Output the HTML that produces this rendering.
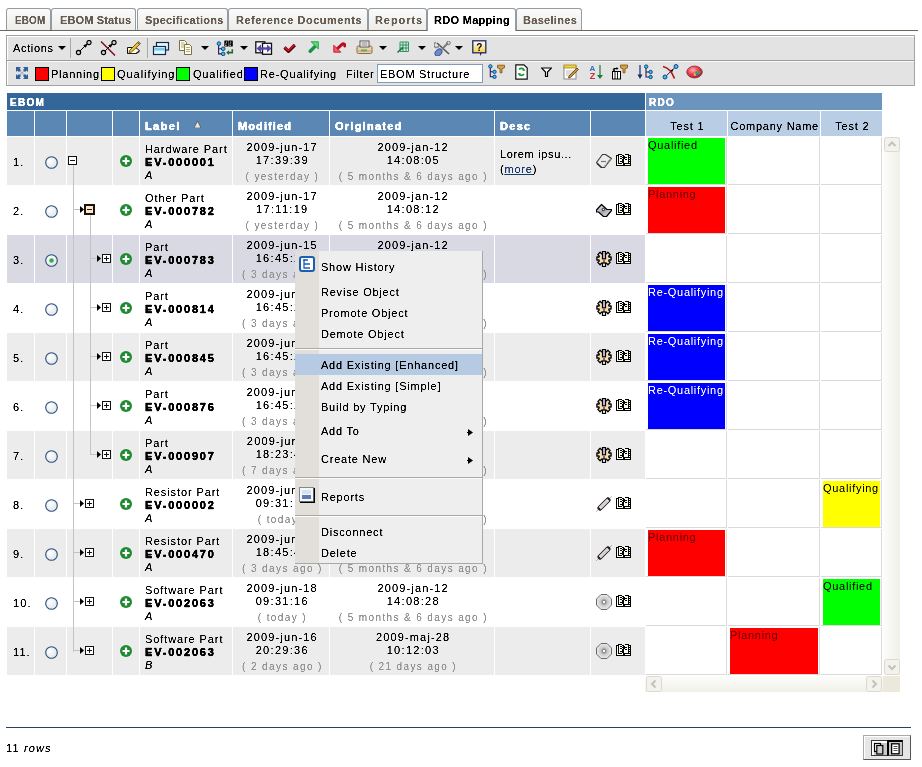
<!DOCTYPE html><html><head><meta charset="utf-8"><style>
html,body{margin:0;padding:0;}
body{will-change:transform;width:922px;height:767px;position:relative;overflow:hidden;background:#fff;font-family:'Liberation Sans', sans-serif;}
.r{position:absolute;box-sizing:border-box;}
.t{position:absolute;white-space:pre;line-height:13px;font-family:'Liberation Sans', sans-serif;filter:url(#crisp);}
</style></head><body>
<svg width="0" height="0" style="position:absolute"><filter id="crisp"><feComponentTransfer><feFuncA type="linear" slope="2" intercept="-0.3"/></feComponentTransfer></filter><filter id="crisp3"><feComponentTransfer><feFuncA type="linear" slope="1.3" intercept="-0.12"/></feComponentTransfer></filter></svg>
<div class="r" style="left:0px;top:30px;width:918px;height:1px;background:#6e655c;"></div>
<div class="r" style="left:6px;top:8px;width:45px;height:22px;background:linear-gradient(#fbfbfb,#ececea);border:1px solid #949ca3;border-bottom:none;border-radius:3px 3px 0 0;"></div>
<div class="t" style="left:15px;top:14px;font-size:11px;letter-spacing:0.2px;color:#675d52;font-weight:bold;-webkit-text-stroke:0.3px #675d52;-webkit-text-stroke:0;transform:scaleX(0.9);transform-origin:0 0;">EBOM</div>
<div class="r" style="left:51px;top:8px;width:85px;height:22px;background:linear-gradient(#fbfbfb,#ececea);border:1px solid #949ca3;border-bottom:none;border-radius:3px 3px 0 0;"></div>
<div class="t" style="left:60px;top:14px;font-size:11px;letter-spacing:0.15px;color:#675d52;font-weight:bold;-webkit-text-stroke:0.3px #675d52;-webkit-text-stroke:0;">EBOM Status</div>
<div class="r" style="left:137px;top:8px;width:91px;height:22px;background:linear-gradient(#fbfbfb,#ececea);border:1px solid #949ca3;border-bottom:none;border-radius:3px 3px 0 0;"></div>
<div class="t" style="left:145px;top:14px;font-size:11px;letter-spacing:0.3px;color:#675d52;font-weight:bold;-webkit-text-stroke:0.3px #675d52;-webkit-text-stroke:0;">Specifications</div>
<div class="r" style="left:228px;top:8px;width:140px;height:22px;background:linear-gradient(#fbfbfb,#ececea);border:1px solid #949ca3;border-bottom:none;border-radius:3px 3px 0 0;"></div>
<div class="t" style="left:236px;top:14px;font-size:11px;letter-spacing:0.52px;color:#675d52;font-weight:bold;-webkit-text-stroke:0.3px #675d52;-webkit-text-stroke:0;">Reference Documents</div>
<div class="r" style="left:368px;top:8px;width:59px;height:22px;background:linear-gradient(#fbfbfb,#ececea);border:1px solid #949ca3;border-bottom:none;border-radius:3px 3px 0 0;"></div>
<div class="t" style="left:375px;top:14px;font-size:11px;letter-spacing:0.93px;color:#675d52;font-weight:bold;-webkit-text-stroke:0.3px #675d52;-webkit-text-stroke:0;">Reports</div>
<div class="r" style="left:427px;top:8px;width:89px;height:23px;background:#ffffff;border:1px solid #949ca3;border-bottom:none;border-radius:3px 3px 0 0;"></div>
<div class="t" style="left:434px;top:14px;font-size:11px;letter-spacing:0.3px;color:#000;font-weight:bold;-webkit-text-stroke:0.3px #000;-webkit-text-stroke:0;">RDO Mapping</div>
<div class="r" style="left:516px;top:8px;width:66px;height:22px;background:linear-gradient(#fbfbfb,#ececea);border:1px solid #949ca3;border-bottom:none;border-radius:3px 3px 0 0;"></div>
<div class="t" style="left:523px;top:14px;font-size:11px;letter-spacing:0.3px;color:#675d52;font-weight:bold;-webkit-text-stroke:0.3px #675d52;-webkit-text-stroke:0;">Baselines</div>
<div class="r" style="left:6px;top:35px;width:909px;height:51px;background:#e3e3e3;border:1px solid #a3a3a3;box-shadow:inset 1px 1px 0 #fff;"></div>
<div class="r" style="left:7px;top:60px;width:907px;height:1px;background:#9c9c9c;"></div>
<div class="r" style="left:7px;top:61px;width:907px;height:1px;background:#fafafa;"></div>
<div class="t" style="left:13px;top:42px;font-size:11px;letter-spacing:0.65px;color:#000;">Actions</div>
<svg class="r" style="left:58px;top:46px;" width="8" height="4" viewBox="0 0 8 4"><path d="M0 0H8L4 4Z" fill="#000"/></svg>
<div class="r" style="left:70px;top:38px;width:1px;height:20px;background:#a8a8a8;"></div>
<div class="r" style="left:147px;top:38px;width:1px;height:20px;background:#a8a8a8;"></div>
<svg class="r" style="left:15px;top:66px;" width="14" height="14" viewBox="0 0 14 14"><g stroke="#a8bccf" stroke-width="1.3" fill="none"><path d="M3 3L11 11M11 3L3 11"/></g><g fill="#2f5e98"><path d="M1 1h5l-1.5 1.5 1.5 1.5-2 2-1.5-1.5L1 6z M13 1h-5l1.5 1.5-1.5 1.5 2 2 1.5-1.5L13 6z M1 13h5l-1.5-1.5 1.5-1.5-2-2-1.5 1.5L1 8z M13 13h-5l1.5-1.5-1.5-1.5 2-2 1.5 1.5L13 8z"/></g></svg>
<div class="r" style="left:35px;top:67px;width:14px;height:14px;background:#ff0000;border:1px solid #000;"></div>
<div class="t" style="left:51px;top:68px;font-size:11px;letter-spacing:0.75px;color:#000;">Planning</div>
<div class="r" style="left:101px;top:67px;width:14px;height:14px;background:#ffff00;border:1px solid #000;"></div>
<div class="t" style="left:117px;top:68px;font-size:11px;letter-spacing:0.95px;color:#000;">Qualifying</div>
<div class="r" style="left:176px;top:67px;width:14px;height:14px;background:#00ff00;border:1px solid #000;"></div>
<div class="t" style="left:193px;top:68px;font-size:11px;letter-spacing:0.8px;color:#000;">Qualified</div>
<div class="r" style="left:244px;top:67px;width:14px;height:14px;background:#0000ff;border:1px solid #000;"></div>
<div class="t" style="left:260px;top:68px;font-size:11px;letter-spacing:0.8px;color:#000;">Re-Qualifying</div>
<div class="t" style="left:346px;top:68px;font-size:11px;letter-spacing:0.65px;color:#000;">Filter</div>
<div class="r" style="left:377px;top:64px;width:106px;height:19px;background:#fff;border:1px solid #7f9db9;"></div>
<div class="t" style="left:380px;top:68px;font-size:11px;letter-spacing:0.72px;color:#000;">EBOM Structure</div>
<div class="r" style="left:7px;top:93px;width:638px;height:17px;background:#336699;"></div>
<div class="t" style="left:10px;top:96px;font-size:10px;letter-spacing:1.3px;color:#fff;font-weight:bold;-webkit-text-stroke:0.3px #fff;-webkit-text-stroke:0.2px #fff;">EBOM</div>
<div class="r" style="left:646px;top:93px;width:236px;height:17px;background:#6b94bf;"></div>
<div class="t" style="left:649px;top:96px;font-size:10px;letter-spacing:1.3px;color:#fff;font-weight:bold;-webkit-text-stroke:0.3px #fff;-webkit-text-stroke:0.2px #fff;">RDO</div>
<div class="r" style="left:7px;top:111px;width:27px;height:25px;background:#5b87b4;"></div>
<div class="r" style="left:35px;top:111px;width:31px;height:25px;background:#5b87b4;"></div>
<div class="r" style="left:67px;top:111px;width:45px;height:25px;background:#5b87b4;"></div>
<div class="r" style="left:113px;top:111px;width:26px;height:25px;background:#5b87b4;"></div>
<div class="r" style="left:140px;top:111px;width:92px;height:25px;background:#5b87b4;"></div>
<div class="r" style="left:233px;top:111px;width:96px;height:25px;background:#5b87b4;"></div>
<div class="r" style="left:330px;top:111px;width:164px;height:25px;background:#5b87b4;"></div>
<div class="r" style="left:495px;top:111px;width:95px;height:25px;background:#5b87b4;"></div>
<div class="r" style="left:591px;top:111px;width:54px;height:25px;background:#5b87b4;"></div>
<div class="t" style="left:145px;top:120px;font-size:11px;letter-spacing:1.4px;color:#fff;font-weight:bold;-webkit-text-stroke:0.3px #fff;">Label</div>
<svg class="r" style="left:194px;top:121px;" width="7" height="7" viewBox="0 0 7 7"><path d="M3.5 0L7 7H0Z" fill="#e8e8e0" stroke="#334" stroke-width="0.6"/></svg>
<div class="t" style="left:238px;top:120px;font-size:11px;letter-spacing:1.1px;color:#fff;font-weight:bold;-webkit-text-stroke:0.3px #fff;">Modified</div>
<div class="t" style="left:335px;top:120px;font-size:11px;letter-spacing:1.25px;color:#fff;font-weight:bold;-webkit-text-stroke:0.3px #fff;">Originated</div>
<div class="t" style="left:500px;top:120px;font-size:11px;letter-spacing:1.3px;color:#fff;font-weight:bold;-webkit-text-stroke:0.3px #fff;">Desc</div>
<div class="r" style="left:646px;top:111px;width:81px;height:25px;background:#b9cde5;"></div>
<div class="t" style="left:646px;top:120px;font-size:11px;letter-spacing:0.8px;color:#000;width:81px;text-align:center;padding-left:0.8px;">Test 1</div>
<div class="r" style="left:728px;top:111px;width:92px;height:25px;background:#b9cde5;"></div>
<div class="t" style="left:728px;top:120px;font-size:11px;letter-spacing:0.75px;color:#000;width:92px;text-align:center;padding-left:0.75px;">Company Name</div>
<div class="r" style="left:821px;top:111px;width:61px;height:25px;background:#b9cde5;"></div>
<div class="t" style="left:821px;top:120px;font-size:11px;letter-spacing:0.8px;color:#000;width:61px;text-align:center;padding-left:0.8px;">Test 2</div>
<div class="r" style="left:7px;top:137px;width:27px;height:48px;background:#ececec;"></div>
<div class="r" style="left:35px;top:137px;width:31px;height:48px;background:#ececec;"></div>
<div class="r" style="left:67px;top:137px;width:45px;height:48px;background:#ececec;"></div>
<div class="r" style="left:113px;top:137px;width:26px;height:48px;background:#ececec;"></div>
<div class="r" style="left:140px;top:137px;width:92px;height:48px;background:#ececec;"></div>
<div class="r" style="left:233px;top:137px;width:96px;height:48px;background:#ececec;"></div>
<div class="r" style="left:330px;top:137px;width:164px;height:48px;background:#ececec;"></div>
<div class="r" style="left:495px;top:137px;width:95px;height:48px;background:#ececec;"></div>
<div class="r" style="left:591px;top:137px;width:54px;height:48px;background:#ececec;"></div>
<div class="t" style="left:13px;top:156px;font-size:11px;letter-spacing:1.1px;color:#000;">1.</div>
<svg class="r" style="left:45px;top:156px;" width="13" height="13" viewBox="0 0 13 13"><defs><radialGradient id="rg0" cx="35%" cy="35%" r="70%"><stop offset="0" stop-color="#fff"/><stop offset="1" stop-color="#dfe6ee"/></radialGradient></defs><circle cx="6.5" cy="6.5" r="5.8" fill="url(#rg0)" stroke="#2c4c74" stroke-width="1.1"/></svg>
<svg class="r" style="left:120px;top:155px;" width="12" height="12" viewBox="0 0 12 12"><circle cx="6" cy="6" r="6" fill="#1f8b30"/><path d="M6 2.5V9.5M2.5 6H9.5" stroke="#fff" stroke-width="2.2"/></svg>
<div class="t" style="left:145px;top:143px;font-size:11px;letter-spacing:0.9px;color:#000;">Hardware Part</div>
<div class="t" style="left:145px;top:156px;font-size:11px;letter-spacing:1.8px;color:#000;font-weight:bold;-webkit-text-stroke:0.3px #000;">EV-000001</div>
<div class="t" style="left:145px;top:169px;font-size:11px;letter-spacing:0px;color:#000;font-style:italic;">A</div>
<div class="t" style="left:233px;top:141px;font-size:11px;letter-spacing:1.15px;color:#000;width:96px;text-align:center;padding-left:1.15px;">2009-jun-17</div>
<div class="t" style="left:233px;top:154px;font-size:11px;letter-spacing:1.3px;color:#000;width:96px;text-align:center;padding-left:1.3px;">17:39:39</div>
<div class="t" style="left:233px;top:170px;font-size:10px;letter-spacing:1.4px;color:#939393;width:96px;text-align:center;padding-left:1.4px;">( yesterday )</div>
<div class="t" style="left:330px;top:141px;font-size:11px;letter-spacing:1.15px;color:#000;width:164px;text-align:center;padding-left:1.15px;">2009-jan-12</div>
<div class="t" style="left:330px;top:154px;font-size:11px;letter-spacing:1.3px;color:#000;width:164px;text-align:center;padding-left:1.3px;">14:08:05</div>
<div class="t" style="left:330px;top:170px;font-size:10px;letter-spacing:1.38px;color:#939393;width:164px;text-align:center;padding-left:1.38px;">( 5 months &amp; 6 days ago )</div>
<div class="r" style="left:646px;top:137px;width:81px;height:48px;background:#fff;border-right:1px solid #dadada;border-bottom:1px solid #dadada;"></div>
<div class="r" style="left:728px;top:137px;width:92px;height:48px;background:#fff;border-right:1px solid #dadada;border-bottom:1px solid #dadada;"></div>
<div class="r" style="left:821px;top:137px;width:61px;height:48px;background:#fff;border-right:1px solid #dadada;border-bottom:1px solid #dadada;"></div>
<div class="r" style="left:648px;top:138px;width:77px;height:46px;background:#00ff00;"></div>
<div class="t" style="left:648px;top:139px;font-size:11px;letter-spacing:0.7px;color:#000;overflow:hidden;width:77px;filter:url(#crisp3);">Qualified</div>
<div class="r" style="left:7px;top:186px;width:27px;height:48px;background:#ffffff;"></div>
<div class="r" style="left:35px;top:186px;width:31px;height:48px;background:#ffffff;"></div>
<div class="r" style="left:67px;top:186px;width:45px;height:48px;background:#ffffff;"></div>
<div class="r" style="left:113px;top:186px;width:26px;height:48px;background:#ffffff;"></div>
<div class="r" style="left:140px;top:186px;width:92px;height:48px;background:#ffffff;"></div>
<div class="r" style="left:233px;top:186px;width:96px;height:48px;background:#ffffff;"></div>
<div class="r" style="left:330px;top:186px;width:164px;height:48px;background:#ffffff;"></div>
<div class="r" style="left:495px;top:186px;width:95px;height:48px;background:#ffffff;"></div>
<div class="r" style="left:591px;top:186px;width:54px;height:48px;background:#ffffff;"></div>
<div class="t" style="left:13px;top:205px;font-size:11px;letter-spacing:1.1px;color:#000;">2.</div>
<svg class="r" style="left:45px;top:205px;" width="13" height="13" viewBox="0 0 13 13"><defs><radialGradient id="rg1" cx="35%" cy="35%" r="70%"><stop offset="0" stop-color="#fff"/><stop offset="1" stop-color="#dfe6ee"/></radialGradient></defs><circle cx="6.5" cy="6.5" r="5.8" fill="url(#rg1)" stroke="#2c4c74" stroke-width="1.1"/></svg>
<svg class="r" style="left:120px;top:204px;" width="12" height="12" viewBox="0 0 12 12"><circle cx="6" cy="6" r="6" fill="#1f8b30"/><path d="M6 2.5V9.5M2.5 6H9.5" stroke="#fff" stroke-width="2.2"/></svg>
<div class="t" style="left:145px;top:192px;font-size:11px;letter-spacing:0.9px;color:#000;">Other Part</div>
<div class="t" style="left:145px;top:205px;font-size:11px;letter-spacing:1.8px;color:#000;font-weight:bold;-webkit-text-stroke:0.3px #000;">EV-000782</div>
<div class="t" style="left:145px;top:218px;font-size:11px;letter-spacing:0px;color:#000;font-style:italic;">A</div>
<div class="t" style="left:233px;top:190px;font-size:11px;letter-spacing:1.15px;color:#000;width:96px;text-align:center;padding-left:1.15px;">2009-jun-17</div>
<div class="t" style="left:233px;top:203px;font-size:11px;letter-spacing:1.3px;color:#000;width:96px;text-align:center;padding-left:1.3px;">17:11:19</div>
<div class="t" style="left:233px;top:219px;font-size:10px;letter-spacing:1.4px;color:#939393;width:96px;text-align:center;padding-left:1.4px;">( yesterday )</div>
<div class="t" style="left:330px;top:190px;font-size:11px;letter-spacing:1.15px;color:#000;width:164px;text-align:center;padding-left:1.15px;">2009-jan-12</div>
<div class="t" style="left:330px;top:203px;font-size:11px;letter-spacing:1.3px;color:#000;width:164px;text-align:center;padding-left:1.3px;">14:08:12</div>
<div class="t" style="left:330px;top:219px;font-size:10px;letter-spacing:1.38px;color:#939393;width:164px;text-align:center;padding-left:1.38px;">( 5 months &amp; 6 days ago )</div>
<div class="r" style="left:646px;top:186px;width:81px;height:48px;background:#fff;border-right:1px solid #dadada;border-bottom:1px solid #dadada;"></div>
<div class="r" style="left:728px;top:186px;width:92px;height:48px;background:#fff;border-right:1px solid #dadada;border-bottom:1px solid #dadada;"></div>
<div class="r" style="left:821px;top:186px;width:61px;height:48px;background:#fff;border-right:1px solid #dadada;border-bottom:1px solid #dadada;"></div>
<div class="r" style="left:648px;top:187px;width:77px;height:46px;background:#ff0000;"></div>
<div class="t" style="left:648px;top:188px;font-size:11px;letter-spacing:0.7px;color:#600;overflow:hidden;width:77px;filter:url(#crisp3);">Planning</div>
<div class="r" style="left:7px;top:235px;width:27px;height:48px;background:#d9d9e4;"></div>
<div class="r" style="left:35px;top:235px;width:31px;height:48px;background:#d9d9e4;"></div>
<div class="r" style="left:67px;top:235px;width:45px;height:48px;background:#d9d9e4;"></div>
<div class="r" style="left:113px;top:235px;width:26px;height:48px;background:#d9d9e4;"></div>
<div class="r" style="left:140px;top:235px;width:92px;height:48px;background:#d9d9e4;"></div>
<div class="r" style="left:233px;top:235px;width:96px;height:48px;background:#d9d9e4;"></div>
<div class="r" style="left:330px;top:235px;width:164px;height:48px;background:#d9d9e4;"></div>
<div class="r" style="left:495px;top:235px;width:95px;height:48px;background:#d9d9e4;"></div>
<div class="r" style="left:591px;top:235px;width:54px;height:48px;background:#d9d9e4;"></div>
<div class="t" style="left:13px;top:254px;font-size:11px;letter-spacing:1.1px;color:#000;">3.</div>
<svg class="r" style="left:45px;top:254px;" width="13" height="13" viewBox="0 0 13 13"><defs><radialGradient id="rg2" cx="35%" cy="35%" r="70%"><stop offset="0" stop-color="#fff"/><stop offset="1" stop-color="#dfe6ee"/></radialGradient></defs><circle cx="6.5" cy="6.5" r="5.8" fill="url(#rg2)" stroke="#2c4c74" stroke-width="1.1"/><circle cx="6.5" cy="6.5" r="2.3" fill="#31b04a"/></svg>
<svg class="r" style="left:120px;top:253px;" width="12" height="12" viewBox="0 0 12 12"><circle cx="6" cy="6" r="6" fill="#1f8b30"/><path d="M6 2.5V9.5M2.5 6H9.5" stroke="#fff" stroke-width="2.2"/></svg>
<div class="t" style="left:145px;top:241px;font-size:11px;letter-spacing:0.9px;color:#000;">Part</div>
<div class="t" style="left:145px;top:254px;font-size:11px;letter-spacing:1.8px;color:#000;font-weight:bold;-webkit-text-stroke:0.3px #000;">EV-000783</div>
<div class="t" style="left:145px;top:267px;font-size:11px;letter-spacing:0px;color:#000;font-style:italic;">A</div>
<div class="t" style="left:233px;top:239px;font-size:11px;letter-spacing:1.15px;color:#000;width:96px;text-align:center;padding-left:1.15px;">2009-jun-15</div>
<div class="t" style="left:233px;top:252px;font-size:11px;letter-spacing:1.3px;color:#000;width:96px;text-align:center;padding-left:1.3px;">16:45:22</div>
<div class="t" style="left:233px;top:268px;font-size:10px;letter-spacing:1.4px;color:#939393;width:96px;text-align:center;padding-left:1.4px;">( 3 days ago )</div>
<div class="t" style="left:330px;top:239px;font-size:11px;letter-spacing:1.15px;color:#000;width:164px;text-align:center;padding-left:1.15px;">2009-jan-12</div>
<div class="t" style="left:330px;top:252px;font-size:11px;letter-spacing:1.3px;color:#000;width:164px;text-align:center;padding-left:1.3px;">14:08:15</div>
<div class="t" style="left:330px;top:268px;font-size:10px;letter-spacing:1.38px;color:#939393;width:164px;text-align:center;padding-left:1.38px;">( 5 months &amp; 6 days ago )</div>
<div class="r" style="left:646px;top:235px;width:81px;height:48px;background:#fff;border-right:1px solid #dadada;border-bottom:1px solid #dadada;"></div>
<div class="r" style="left:728px;top:235px;width:92px;height:48px;background:#fff;border-right:1px solid #dadada;border-bottom:1px solid #dadada;"></div>
<div class="r" style="left:821px;top:235px;width:61px;height:48px;background:#fff;border-right:1px solid #dadada;border-bottom:1px solid #dadada;"></div>
<div class="r" style="left:7px;top:284px;width:27px;height:48px;background:#ffffff;"></div>
<div class="r" style="left:35px;top:284px;width:31px;height:48px;background:#ffffff;"></div>
<div class="r" style="left:67px;top:284px;width:45px;height:48px;background:#ffffff;"></div>
<div class="r" style="left:113px;top:284px;width:26px;height:48px;background:#ffffff;"></div>
<div class="r" style="left:140px;top:284px;width:92px;height:48px;background:#ffffff;"></div>
<div class="r" style="left:233px;top:284px;width:96px;height:48px;background:#ffffff;"></div>
<div class="r" style="left:330px;top:284px;width:164px;height:48px;background:#ffffff;"></div>
<div class="r" style="left:495px;top:284px;width:95px;height:48px;background:#ffffff;"></div>
<div class="r" style="left:591px;top:284px;width:54px;height:48px;background:#ffffff;"></div>
<div class="t" style="left:13px;top:303px;font-size:11px;letter-spacing:1.1px;color:#000;">4.</div>
<svg class="r" style="left:45px;top:303px;" width="13" height="13" viewBox="0 0 13 13"><defs><radialGradient id="rg3" cx="35%" cy="35%" r="70%"><stop offset="0" stop-color="#fff"/><stop offset="1" stop-color="#dfe6ee"/></radialGradient></defs><circle cx="6.5" cy="6.5" r="5.8" fill="url(#rg3)" stroke="#2c4c74" stroke-width="1.1"/></svg>
<svg class="r" style="left:120px;top:302px;" width="12" height="12" viewBox="0 0 12 12"><circle cx="6" cy="6" r="6" fill="#1f8b30"/><path d="M6 2.5V9.5M2.5 6H9.5" stroke="#fff" stroke-width="2.2"/></svg>
<div class="t" style="left:145px;top:290px;font-size:11px;letter-spacing:0.9px;color:#000;">Part</div>
<div class="t" style="left:145px;top:303px;font-size:11px;letter-spacing:1.8px;color:#000;font-weight:bold;-webkit-text-stroke:0.3px #000;">EV-000814</div>
<div class="t" style="left:145px;top:316px;font-size:11px;letter-spacing:0px;color:#000;font-style:italic;">A</div>
<div class="t" style="left:233px;top:288px;font-size:11px;letter-spacing:1.15px;color:#000;width:96px;text-align:center;padding-left:1.15px;">2009-jun-15</div>
<div class="t" style="left:233px;top:301px;font-size:11px;letter-spacing:1.3px;color:#000;width:96px;text-align:center;padding-left:1.3px;">16:45:23</div>
<div class="t" style="left:233px;top:317px;font-size:10px;letter-spacing:1.4px;color:#939393;width:96px;text-align:center;padding-left:1.4px;">( 3 days ago )</div>
<div class="t" style="left:330px;top:288px;font-size:11px;letter-spacing:1.15px;color:#000;width:164px;text-align:center;padding-left:1.15px;">2009-jan-12</div>
<div class="t" style="left:330px;top:301px;font-size:11px;letter-spacing:1.3px;color:#000;width:164px;text-align:center;padding-left:1.3px;">14:08:16</div>
<div class="t" style="left:330px;top:317px;font-size:10px;letter-spacing:1.38px;color:#939393;width:164px;text-align:center;padding-left:1.38px;">( 5 months &amp; 6 days ago )</div>
<div class="r" style="left:646px;top:284px;width:81px;height:48px;background:#fff;border-right:1px solid #dadada;border-bottom:1px solid #dadada;"></div>
<div class="r" style="left:728px;top:284px;width:92px;height:48px;background:#fff;border-right:1px solid #dadada;border-bottom:1px solid #dadada;"></div>
<div class="r" style="left:821px;top:284px;width:61px;height:48px;background:#fff;border-right:1px solid #dadada;border-bottom:1px solid #dadada;"></div>
<div class="r" style="left:648px;top:285px;width:77px;height:46px;background:#0000ff;"></div>
<div class="t" style="left:648px;top:286px;font-size:11px;letter-spacing:0.7px;color:#fff;overflow:hidden;width:77px;filter:url(#crisp3);">Re-Qualifying</div>
<div class="r" style="left:7px;top:333px;width:27px;height:48px;background:#ececec;"></div>
<div class="r" style="left:35px;top:333px;width:31px;height:48px;background:#ececec;"></div>
<div class="r" style="left:67px;top:333px;width:45px;height:48px;background:#ececec;"></div>
<div class="r" style="left:113px;top:333px;width:26px;height:48px;background:#ececec;"></div>
<div class="r" style="left:140px;top:333px;width:92px;height:48px;background:#ececec;"></div>
<div class="r" style="left:233px;top:333px;width:96px;height:48px;background:#ececec;"></div>
<div class="r" style="left:330px;top:333px;width:164px;height:48px;background:#ececec;"></div>
<div class="r" style="left:495px;top:333px;width:95px;height:48px;background:#ececec;"></div>
<div class="r" style="left:591px;top:333px;width:54px;height:48px;background:#ececec;"></div>
<div class="t" style="left:13px;top:352px;font-size:11px;letter-spacing:1.1px;color:#000;">5.</div>
<svg class="r" style="left:45px;top:352px;" width="13" height="13" viewBox="0 0 13 13"><defs><radialGradient id="rg4" cx="35%" cy="35%" r="70%"><stop offset="0" stop-color="#fff"/><stop offset="1" stop-color="#dfe6ee"/></radialGradient></defs><circle cx="6.5" cy="6.5" r="5.8" fill="url(#rg4)" stroke="#2c4c74" stroke-width="1.1"/></svg>
<svg class="r" style="left:120px;top:351px;" width="12" height="12" viewBox="0 0 12 12"><circle cx="6" cy="6" r="6" fill="#1f8b30"/><path d="M6 2.5V9.5M2.5 6H9.5" stroke="#fff" stroke-width="2.2"/></svg>
<div class="t" style="left:145px;top:339px;font-size:11px;letter-spacing:0.9px;color:#000;">Part</div>
<div class="t" style="left:145px;top:352px;font-size:11px;letter-spacing:1.8px;color:#000;font-weight:bold;-webkit-text-stroke:0.3px #000;">EV-000845</div>
<div class="t" style="left:145px;top:365px;font-size:11px;letter-spacing:0px;color:#000;font-style:italic;">A</div>
<div class="t" style="left:233px;top:337px;font-size:11px;letter-spacing:1.15px;color:#000;width:96px;text-align:center;padding-left:1.15px;">2009-jun-15</div>
<div class="t" style="left:233px;top:350px;font-size:11px;letter-spacing:1.3px;color:#000;width:96px;text-align:center;padding-left:1.3px;">16:45:23</div>
<div class="t" style="left:233px;top:366px;font-size:10px;letter-spacing:1.4px;color:#939393;width:96px;text-align:center;padding-left:1.4px;">( 3 days ago )</div>
<div class="t" style="left:330px;top:337px;font-size:11px;letter-spacing:1.15px;color:#000;width:164px;text-align:center;padding-left:1.15px;">2009-jan-12</div>
<div class="t" style="left:330px;top:350px;font-size:11px;letter-spacing:1.3px;color:#000;width:164px;text-align:center;padding-left:1.3px;">14:08:17</div>
<div class="t" style="left:330px;top:366px;font-size:10px;letter-spacing:1.38px;color:#939393;width:164px;text-align:center;padding-left:1.38px;">( 5 months &amp; 6 days ago )</div>
<div class="r" style="left:646px;top:333px;width:81px;height:48px;background:#fff;border-right:1px solid #dadada;border-bottom:1px solid #dadada;"></div>
<div class="r" style="left:728px;top:333px;width:92px;height:48px;background:#fff;border-right:1px solid #dadada;border-bottom:1px solid #dadada;"></div>
<div class="r" style="left:821px;top:333px;width:61px;height:48px;background:#fff;border-right:1px solid #dadada;border-bottom:1px solid #dadada;"></div>
<div class="r" style="left:648px;top:334px;width:77px;height:46px;background:#0000ff;"></div>
<div class="t" style="left:648px;top:335px;font-size:11px;letter-spacing:0.7px;color:#fff;overflow:hidden;width:77px;filter:url(#crisp3);">Re-Qualifying</div>
<div class="r" style="left:7px;top:382px;width:27px;height:48px;background:#ffffff;"></div>
<div class="r" style="left:35px;top:382px;width:31px;height:48px;background:#ffffff;"></div>
<div class="r" style="left:67px;top:382px;width:45px;height:48px;background:#ffffff;"></div>
<div class="r" style="left:113px;top:382px;width:26px;height:48px;background:#ffffff;"></div>
<div class="r" style="left:140px;top:382px;width:92px;height:48px;background:#ffffff;"></div>
<div class="r" style="left:233px;top:382px;width:96px;height:48px;background:#ffffff;"></div>
<div class="r" style="left:330px;top:382px;width:164px;height:48px;background:#ffffff;"></div>
<div class="r" style="left:495px;top:382px;width:95px;height:48px;background:#ffffff;"></div>
<div class="r" style="left:591px;top:382px;width:54px;height:48px;background:#ffffff;"></div>
<div class="t" style="left:13px;top:401px;font-size:11px;letter-spacing:1.1px;color:#000;">6.</div>
<svg class="r" style="left:45px;top:401px;" width="13" height="13" viewBox="0 0 13 13"><defs><radialGradient id="rg5" cx="35%" cy="35%" r="70%"><stop offset="0" stop-color="#fff"/><stop offset="1" stop-color="#dfe6ee"/></radialGradient></defs><circle cx="6.5" cy="6.5" r="5.8" fill="url(#rg5)" stroke="#2c4c74" stroke-width="1.1"/></svg>
<svg class="r" style="left:120px;top:400px;" width="12" height="12" viewBox="0 0 12 12"><circle cx="6" cy="6" r="6" fill="#1f8b30"/><path d="M6 2.5V9.5M2.5 6H9.5" stroke="#fff" stroke-width="2.2"/></svg>
<div class="t" style="left:145px;top:388px;font-size:11px;letter-spacing:0.9px;color:#000;">Part</div>
<div class="t" style="left:145px;top:401px;font-size:11px;letter-spacing:1.8px;color:#000;font-weight:bold;-webkit-text-stroke:0.3px #000;">EV-000876</div>
<div class="t" style="left:145px;top:414px;font-size:11px;letter-spacing:0px;color:#000;font-style:italic;">A</div>
<div class="t" style="left:233px;top:386px;font-size:11px;letter-spacing:1.15px;color:#000;width:96px;text-align:center;padding-left:1.15px;">2009-jun-15</div>
<div class="t" style="left:233px;top:399px;font-size:11px;letter-spacing:1.3px;color:#000;width:96px;text-align:center;padding-left:1.3px;">16:45:24</div>
<div class="t" style="left:233px;top:415px;font-size:10px;letter-spacing:1.4px;color:#939393;width:96px;text-align:center;padding-left:1.4px;">( 3 days ago )</div>
<div class="t" style="left:330px;top:386px;font-size:11px;letter-spacing:1.15px;color:#000;width:164px;text-align:center;padding-left:1.15px;">2009-jan-12</div>
<div class="t" style="left:330px;top:399px;font-size:11px;letter-spacing:1.3px;color:#000;width:164px;text-align:center;padding-left:1.3px;">14:08:18</div>
<div class="t" style="left:330px;top:415px;font-size:10px;letter-spacing:1.38px;color:#939393;width:164px;text-align:center;padding-left:1.38px;">( 5 months &amp; 6 days ago )</div>
<div class="r" style="left:646px;top:382px;width:81px;height:48px;background:#fff;border-right:1px solid #dadada;border-bottom:1px solid #dadada;"></div>
<div class="r" style="left:728px;top:382px;width:92px;height:48px;background:#fff;border-right:1px solid #dadada;border-bottom:1px solid #dadada;"></div>
<div class="r" style="left:821px;top:382px;width:61px;height:48px;background:#fff;border-right:1px solid #dadada;border-bottom:1px solid #dadada;"></div>
<div class="r" style="left:648px;top:383px;width:77px;height:46px;background:#0000ff;"></div>
<div class="t" style="left:648px;top:384px;font-size:11px;letter-spacing:0.7px;color:#fff;overflow:hidden;width:77px;filter:url(#crisp3);">Re-Qualifying</div>
<div class="r" style="left:7px;top:431px;width:27px;height:48px;background:#ececec;"></div>
<div class="r" style="left:35px;top:431px;width:31px;height:48px;background:#ececec;"></div>
<div class="r" style="left:67px;top:431px;width:45px;height:48px;background:#ececec;"></div>
<div class="r" style="left:113px;top:431px;width:26px;height:48px;background:#ececec;"></div>
<div class="r" style="left:140px;top:431px;width:92px;height:48px;background:#ececec;"></div>
<div class="r" style="left:233px;top:431px;width:96px;height:48px;background:#ececec;"></div>
<div class="r" style="left:330px;top:431px;width:164px;height:48px;background:#ececec;"></div>
<div class="r" style="left:495px;top:431px;width:95px;height:48px;background:#ececec;"></div>
<div class="r" style="left:591px;top:431px;width:54px;height:48px;background:#ececec;"></div>
<div class="t" style="left:13px;top:450px;font-size:11px;letter-spacing:1.1px;color:#000;">7.</div>
<svg class="r" style="left:45px;top:450px;" width="13" height="13" viewBox="0 0 13 13"><defs><radialGradient id="rg6" cx="35%" cy="35%" r="70%"><stop offset="0" stop-color="#fff"/><stop offset="1" stop-color="#dfe6ee"/></radialGradient></defs><circle cx="6.5" cy="6.5" r="5.8" fill="url(#rg6)" stroke="#2c4c74" stroke-width="1.1"/></svg>
<svg class="r" style="left:120px;top:449px;" width="12" height="12" viewBox="0 0 12 12"><circle cx="6" cy="6" r="6" fill="#1f8b30"/><path d="M6 2.5V9.5M2.5 6H9.5" stroke="#fff" stroke-width="2.2"/></svg>
<div class="t" style="left:145px;top:437px;font-size:11px;letter-spacing:0.9px;color:#000;">Part</div>
<div class="t" style="left:145px;top:450px;font-size:11px;letter-spacing:1.8px;color:#000;font-weight:bold;-webkit-text-stroke:0.3px #000;">EV-000907</div>
<div class="t" style="left:145px;top:463px;font-size:11px;letter-spacing:0px;color:#000;font-style:italic;">A</div>
<div class="t" style="left:233px;top:435px;font-size:11px;letter-spacing:1.15px;color:#000;width:96px;text-align:center;padding-left:1.15px;">2009-jun-11</div>
<div class="t" style="left:233px;top:448px;font-size:11px;letter-spacing:1.3px;color:#000;width:96px;text-align:center;padding-left:1.3px;">18:23:40</div>
<div class="t" style="left:233px;top:464px;font-size:10px;letter-spacing:1.4px;color:#939393;width:96px;text-align:center;padding-left:1.4px;">( 7 days ago )</div>
<div class="t" style="left:330px;top:435px;font-size:11px;letter-spacing:1.15px;color:#000;width:164px;text-align:center;padding-left:1.15px;">2009-jan-12</div>
<div class="t" style="left:330px;top:448px;font-size:11px;letter-spacing:1.3px;color:#000;width:164px;text-align:center;padding-left:1.3px;">14:08:19</div>
<div class="t" style="left:330px;top:464px;font-size:10px;letter-spacing:1.38px;color:#939393;width:164px;text-align:center;padding-left:1.38px;">( 5 months &amp; 6 days ago )</div>
<div class="r" style="left:646px;top:431px;width:81px;height:48px;background:#fff;border-right:1px solid #dadada;border-bottom:1px solid #dadada;"></div>
<div class="r" style="left:728px;top:431px;width:92px;height:48px;background:#fff;border-right:1px solid #dadada;border-bottom:1px solid #dadada;"></div>
<div class="r" style="left:821px;top:431px;width:61px;height:48px;background:#fff;border-right:1px solid #dadada;border-bottom:1px solid #dadada;"></div>
<div class="r" style="left:7px;top:480px;width:27px;height:48px;background:#ffffff;"></div>
<div class="r" style="left:35px;top:480px;width:31px;height:48px;background:#ffffff;"></div>
<div class="r" style="left:67px;top:480px;width:45px;height:48px;background:#ffffff;"></div>
<div class="r" style="left:113px;top:480px;width:26px;height:48px;background:#ffffff;"></div>
<div class="r" style="left:140px;top:480px;width:92px;height:48px;background:#ffffff;"></div>
<div class="r" style="left:233px;top:480px;width:96px;height:48px;background:#ffffff;"></div>
<div class="r" style="left:330px;top:480px;width:164px;height:48px;background:#ffffff;"></div>
<div class="r" style="left:495px;top:480px;width:95px;height:48px;background:#ffffff;"></div>
<div class="r" style="left:591px;top:480px;width:54px;height:48px;background:#ffffff;"></div>
<div class="t" style="left:13px;top:499px;font-size:11px;letter-spacing:1.1px;color:#000;">8.</div>
<svg class="r" style="left:45px;top:499px;" width="13" height="13" viewBox="0 0 13 13"><defs><radialGradient id="rg7" cx="35%" cy="35%" r="70%"><stop offset="0" stop-color="#fff"/><stop offset="1" stop-color="#dfe6ee"/></radialGradient></defs><circle cx="6.5" cy="6.5" r="5.8" fill="url(#rg7)" stroke="#2c4c74" stroke-width="1.1"/></svg>
<svg class="r" style="left:120px;top:498px;" width="12" height="12" viewBox="0 0 12 12"><circle cx="6" cy="6" r="6" fill="#1f8b30"/><path d="M6 2.5V9.5M2.5 6H9.5" stroke="#fff" stroke-width="2.2"/></svg>
<div class="t" style="left:145px;top:486px;font-size:11px;letter-spacing:0.9px;color:#000;">Resistor Part</div>
<div class="t" style="left:145px;top:499px;font-size:11px;letter-spacing:1.8px;color:#000;font-weight:bold;-webkit-text-stroke:0.3px #000;">EV-000002</div>
<div class="t" style="left:145px;top:512px;font-size:11px;letter-spacing:0px;color:#000;font-style:italic;">A</div>
<div class="t" style="left:233px;top:484px;font-size:11px;letter-spacing:1.15px;color:#000;width:96px;text-align:center;padding-left:1.15px;">2009-jun-18</div>
<div class="t" style="left:233px;top:497px;font-size:11px;letter-spacing:1.3px;color:#000;width:96px;text-align:center;padding-left:1.3px;">09:31:16</div>
<div class="t" style="left:233px;top:513px;font-size:10px;letter-spacing:1.4px;color:#939393;width:96px;text-align:center;padding-left:1.4px;">( today )</div>
<div class="t" style="left:330px;top:484px;font-size:11px;letter-spacing:1.15px;color:#000;width:164px;text-align:center;padding-left:1.15px;">2009-jan-12</div>
<div class="t" style="left:330px;top:497px;font-size:11px;letter-spacing:1.3px;color:#000;width:164px;text-align:center;padding-left:1.3px;">14:08:20</div>
<div class="t" style="left:330px;top:513px;font-size:10px;letter-spacing:1.38px;color:#939393;width:164px;text-align:center;padding-left:1.38px;">( 5 months &amp; 6 days ago )</div>
<div class="r" style="left:646px;top:480px;width:81px;height:48px;background:#fff;border-right:1px solid #dadada;border-bottom:1px solid #dadada;"></div>
<div class="r" style="left:728px;top:480px;width:92px;height:48px;background:#fff;border-right:1px solid #dadada;border-bottom:1px solid #dadada;"></div>
<div class="r" style="left:821px;top:480px;width:61px;height:48px;background:#fff;border-right:1px solid #dadada;border-bottom:1px solid #dadada;"></div>
<div class="r" style="left:823px;top:481px;width:57px;height:46px;background:#ffff00;"></div>
<div class="t" style="left:823px;top:482px;font-size:11px;letter-spacing:0.7px;color:#000;overflow:hidden;width:57px;filter:url(#crisp3);">Qualifying</div>
<div class="r" style="left:7px;top:529px;width:27px;height:48px;background:#ececec;"></div>
<div class="r" style="left:35px;top:529px;width:31px;height:48px;background:#ececec;"></div>
<div class="r" style="left:67px;top:529px;width:45px;height:48px;background:#ececec;"></div>
<div class="r" style="left:113px;top:529px;width:26px;height:48px;background:#ececec;"></div>
<div class="r" style="left:140px;top:529px;width:92px;height:48px;background:#ececec;"></div>
<div class="r" style="left:233px;top:529px;width:96px;height:48px;background:#ececec;"></div>
<div class="r" style="left:330px;top:529px;width:164px;height:48px;background:#ececec;"></div>
<div class="r" style="left:495px;top:529px;width:95px;height:48px;background:#ececec;"></div>
<div class="r" style="left:591px;top:529px;width:54px;height:48px;background:#ececec;"></div>
<div class="t" style="left:13px;top:548px;font-size:11px;letter-spacing:1.1px;color:#000;">9.</div>
<svg class="r" style="left:45px;top:548px;" width="13" height="13" viewBox="0 0 13 13"><defs><radialGradient id="rg8" cx="35%" cy="35%" r="70%"><stop offset="0" stop-color="#fff"/><stop offset="1" stop-color="#dfe6ee"/></radialGradient></defs><circle cx="6.5" cy="6.5" r="5.8" fill="url(#rg8)" stroke="#2c4c74" stroke-width="1.1"/></svg>
<svg class="r" style="left:120px;top:547px;" width="12" height="12" viewBox="0 0 12 12"><circle cx="6" cy="6" r="6" fill="#1f8b30"/><path d="M6 2.5V9.5M2.5 6H9.5" stroke="#fff" stroke-width="2.2"/></svg>
<div class="t" style="left:145px;top:535px;font-size:11px;letter-spacing:0.9px;color:#000;">Resistor Part</div>
<div class="t" style="left:145px;top:548px;font-size:11px;letter-spacing:1.8px;color:#000;font-weight:bold;-webkit-text-stroke:0.3px #000;">EV-000470</div>
<div class="t" style="left:145px;top:561px;font-size:11px;letter-spacing:0px;color:#000;font-style:italic;">A</div>
<div class="t" style="left:233px;top:533px;font-size:11px;letter-spacing:1.15px;color:#000;width:96px;text-align:center;padding-left:1.15px;">2009-jun-15</div>
<div class="t" style="left:233px;top:546px;font-size:11px;letter-spacing:1.3px;color:#000;width:96px;text-align:center;padding-left:1.3px;">18:45:40</div>
<div class="t" style="left:233px;top:562px;font-size:10px;letter-spacing:1.4px;color:#939393;width:96px;text-align:center;padding-left:1.4px;">( 3 days ago )</div>
<div class="t" style="left:330px;top:533px;font-size:11px;letter-spacing:1.15px;color:#000;width:164px;text-align:center;padding-left:1.15px;">2009-jan-12</div>
<div class="t" style="left:330px;top:546px;font-size:11px;letter-spacing:1.3px;color:#000;width:164px;text-align:center;padding-left:1.3px;">14:08:25</div>
<div class="t" style="left:330px;top:562px;font-size:10px;letter-spacing:1.38px;color:#939393;width:164px;text-align:center;padding-left:1.38px;">( 5 months &amp; 6 days ago )</div>
<div class="r" style="left:646px;top:529px;width:81px;height:48px;background:#fff;border-right:1px solid #dadada;border-bottom:1px solid #dadada;"></div>
<div class="r" style="left:728px;top:529px;width:92px;height:48px;background:#fff;border-right:1px solid #dadada;border-bottom:1px solid #dadada;"></div>
<div class="r" style="left:821px;top:529px;width:61px;height:48px;background:#fff;border-right:1px solid #dadada;border-bottom:1px solid #dadada;"></div>
<div class="r" style="left:648px;top:530px;width:77px;height:46px;background:#ff0000;"></div>
<div class="t" style="left:648px;top:531px;font-size:11px;letter-spacing:0.7px;color:#600;overflow:hidden;width:77px;filter:url(#crisp3);">Planning</div>
<div class="r" style="left:7px;top:578px;width:27px;height:48px;background:#ffffff;"></div>
<div class="r" style="left:35px;top:578px;width:31px;height:48px;background:#ffffff;"></div>
<div class="r" style="left:67px;top:578px;width:45px;height:48px;background:#ffffff;"></div>
<div class="r" style="left:113px;top:578px;width:26px;height:48px;background:#ffffff;"></div>
<div class="r" style="left:140px;top:578px;width:92px;height:48px;background:#ffffff;"></div>
<div class="r" style="left:233px;top:578px;width:96px;height:48px;background:#ffffff;"></div>
<div class="r" style="left:330px;top:578px;width:164px;height:48px;background:#ffffff;"></div>
<div class="r" style="left:495px;top:578px;width:95px;height:48px;background:#ffffff;"></div>
<div class="r" style="left:591px;top:578px;width:54px;height:48px;background:#ffffff;"></div>
<div class="t" style="left:13px;top:597px;font-size:11px;letter-spacing:1.1px;color:#000;">10.</div>
<svg class="r" style="left:45px;top:597px;" width="13" height="13" viewBox="0 0 13 13"><defs><radialGradient id="rg9" cx="35%" cy="35%" r="70%"><stop offset="0" stop-color="#fff"/><stop offset="1" stop-color="#dfe6ee"/></radialGradient></defs><circle cx="6.5" cy="6.5" r="5.8" fill="url(#rg9)" stroke="#2c4c74" stroke-width="1.1"/></svg>
<svg class="r" style="left:120px;top:596px;" width="12" height="12" viewBox="0 0 12 12"><circle cx="6" cy="6" r="6" fill="#1f8b30"/><path d="M6 2.5V9.5M2.5 6H9.5" stroke="#fff" stroke-width="2.2"/></svg>
<div class="t" style="left:145px;top:584px;font-size:11px;letter-spacing:0.9px;color:#000;">Software Part</div>
<div class="t" style="left:145px;top:597px;font-size:11px;letter-spacing:1.8px;color:#000;font-weight:bold;-webkit-text-stroke:0.3px #000;">EV-002063</div>
<div class="t" style="left:145px;top:610px;font-size:11px;letter-spacing:0px;color:#000;font-style:italic;">A</div>
<div class="t" style="left:233px;top:582px;font-size:11px;letter-spacing:1.15px;color:#000;width:96px;text-align:center;padding-left:1.15px;">2009-jun-18</div>
<div class="t" style="left:233px;top:595px;font-size:11px;letter-spacing:1.3px;color:#000;width:96px;text-align:center;padding-left:1.3px;">09:31:16</div>
<div class="t" style="left:233px;top:611px;font-size:10px;letter-spacing:1.4px;color:#939393;width:96px;text-align:center;padding-left:1.4px;">( today )</div>
<div class="t" style="left:330px;top:582px;font-size:11px;letter-spacing:1.15px;color:#000;width:164px;text-align:center;padding-left:1.15px;">2009-jan-12</div>
<div class="t" style="left:330px;top:595px;font-size:11px;letter-spacing:1.3px;color:#000;width:164px;text-align:center;padding-left:1.3px;">14:08:28</div>
<div class="t" style="left:330px;top:611px;font-size:10px;letter-spacing:1.38px;color:#939393;width:164px;text-align:center;padding-left:1.38px;">( 5 months &amp; 6 days ago )</div>
<div class="r" style="left:646px;top:578px;width:81px;height:48px;background:#fff;border-right:1px solid #dadada;border-bottom:1px solid #dadada;"></div>
<div class="r" style="left:728px;top:578px;width:92px;height:48px;background:#fff;border-right:1px solid #dadada;border-bottom:1px solid #dadada;"></div>
<div class="r" style="left:821px;top:578px;width:61px;height:48px;background:#fff;border-right:1px solid #dadada;border-bottom:1px solid #dadada;"></div>
<div class="r" style="left:823px;top:579px;width:57px;height:46px;background:#00ff00;"></div>
<div class="t" style="left:823px;top:580px;font-size:11px;letter-spacing:0.7px;color:#000;overflow:hidden;width:57px;filter:url(#crisp3);">Qualified</div>
<div class="r" style="left:7px;top:627px;width:27px;height:48px;background:#ececec;"></div>
<div class="r" style="left:35px;top:627px;width:31px;height:48px;background:#ececec;"></div>
<div class="r" style="left:67px;top:627px;width:45px;height:48px;background:#ececec;"></div>
<div class="r" style="left:113px;top:627px;width:26px;height:48px;background:#ececec;"></div>
<div class="r" style="left:140px;top:627px;width:92px;height:48px;background:#ececec;"></div>
<div class="r" style="left:233px;top:627px;width:96px;height:48px;background:#ececec;"></div>
<div class="r" style="left:330px;top:627px;width:164px;height:48px;background:#ececec;"></div>
<div class="r" style="left:495px;top:627px;width:95px;height:48px;background:#ececec;"></div>
<div class="r" style="left:591px;top:627px;width:54px;height:48px;background:#ececec;"></div>
<div class="t" style="left:13px;top:646px;font-size:11px;letter-spacing:1.1px;color:#000;">11.</div>
<svg class="r" style="left:45px;top:646px;" width="13" height="13" viewBox="0 0 13 13"><defs><radialGradient id="rg10" cx="35%" cy="35%" r="70%"><stop offset="0" stop-color="#fff"/><stop offset="1" stop-color="#dfe6ee"/></radialGradient></defs><circle cx="6.5" cy="6.5" r="5.8" fill="url(#rg10)" stroke="#2c4c74" stroke-width="1.1"/></svg>
<svg class="r" style="left:120px;top:645px;" width="12" height="12" viewBox="0 0 12 12"><circle cx="6" cy="6" r="6" fill="#1f8b30"/><path d="M6 2.5V9.5M2.5 6H9.5" stroke="#fff" stroke-width="2.2"/></svg>
<div class="t" style="left:145px;top:633px;font-size:11px;letter-spacing:0.9px;color:#000;">Software Part</div>
<div class="t" style="left:145px;top:646px;font-size:11px;letter-spacing:1.8px;color:#000;font-weight:bold;-webkit-text-stroke:0.3px #000;">EV-002063</div>
<div class="t" style="left:145px;top:659px;font-size:11px;letter-spacing:0px;color:#000;font-style:italic;">B</div>
<div class="t" style="left:233px;top:631px;font-size:11px;letter-spacing:1.15px;color:#000;width:96px;text-align:center;padding-left:1.15px;">2009-jun-16</div>
<div class="t" style="left:233px;top:644px;font-size:11px;letter-spacing:1.3px;color:#000;width:96px;text-align:center;padding-left:1.3px;">20:29:36</div>
<div class="t" style="left:233px;top:660px;font-size:10px;letter-spacing:1.4px;color:#939393;width:96px;text-align:center;padding-left:1.4px;">( 2 days ago )</div>
<div class="t" style="left:330px;top:631px;font-size:11px;letter-spacing:1.15px;color:#000;width:164px;text-align:center;padding-left:1.15px;">2009-maj-28</div>
<div class="t" style="left:330px;top:644px;font-size:11px;letter-spacing:1.3px;color:#000;width:164px;text-align:center;padding-left:1.3px;">10:12:03</div>
<div class="t" style="left:330px;top:660px;font-size:10px;letter-spacing:1.38px;color:#939393;width:164px;text-align:center;padding-left:1.38px;">( 21 days ago )</div>
<div class="r" style="left:646px;top:627px;width:81px;height:48px;background:#fff;border-right:1px solid #dadada;border-bottom:1px solid #dadada;"></div>
<div class="r" style="left:728px;top:627px;width:92px;height:48px;background:#fff;border-right:1px solid #dadada;border-bottom:1px solid #dadada;"></div>
<div class="r" style="left:821px;top:627px;width:61px;height:48px;background:#fff;border-right:1px solid #dadada;border-bottom:1px solid #dadada;"></div>
<div class="r" style="left:730px;top:628px;width:88px;height:46px;background:#ff0000;"></div>
<div class="t" style="left:730px;top:629px;font-size:11px;letter-spacing:0.7px;color:#600;overflow:hidden;width:88px;filter:url(#crisp3);">Planning</div>
<div class="r" style="left:883px;top:137px;width:17px;height:538px;background:linear-gradient(90deg,#fdfdfb,#f0efe8);"></div>
<div class="r" style="left:645px;top:676px;width:238px;height:16px;background:linear-gradient(#fdfdfb,#f0efe8);"></div>
<div class="r" style="left:883px;top:676px;width:17px;height:16px;background:#ebe9dc;"></div>
<div class="r" style="left:863px;top:735px;width:48px;height:25px;background:#e6e6e6;border:1px solid #555;border-top-color:#aaa;border-left-color:#aaa;"></div>
<div class="r" style="left:73px;top:165px;width:1px;height:487px;background:#c3c3c3;"></div>
<div class="r" style="left:90px;top:215px;width:1px;height:240px;background:#c3c3c3;"></div>
<div class="r" style="left:68px;top:156px;width:9px;height:9px;background:#fff;border:1px solid #111;"></div>
<div class="r" style="left:70px;top:160px;width:5px;height:1px;background:#111;"></div>
<div class="r" style="left:73px;top:209px;width:7px;height:1px;background:#c3c3c3;"></div>
<svg class="r" style="left:80px;top:206px;" width="4" height="7" viewBox="0 0 4 7"><path d="M0 0L4 3.5L0 7Z" fill="#000"/></svg>
<div class="r" style="left:84px;top:204px;width:11px;height:11px;background:#fde8cc;border:2px solid #1b140c;"></div>
<div class="r" style="left:87px;top:209px;width:5px;height:1px;background:#2a1a08;"></div>
<div class="r" style="left:90px;top:258px;width:7px;height:1px;background:#c3c3c3;"></div>
<svg class="r" style="left:97px;top:255px;" width="4" height="7" viewBox="0 0 4 7"><path d="M0 0L4 3.5L0 7Z" fill="#000"/></svg>
<div class="r" style="left:102px;top:254px;width:9px;height:9px;background:#fff;border:1px solid #111;"></div>
<div class="r" style="left:104px;top:258px;width:5px;height:1px;background:#111;"></div>
<div class="r" style="left:106px;top:256px;width:1px;height:5px;background:#111;"></div>
<div class="r" style="left:90px;top:307px;width:7px;height:1px;background:#c3c3c3;"></div>
<svg class="r" style="left:97px;top:304px;" width="4" height="7" viewBox="0 0 4 7"><path d="M0 0L4 3.5L0 7Z" fill="#000"/></svg>
<div class="r" style="left:102px;top:303px;width:9px;height:9px;background:#fff;border:1px solid #111;"></div>
<div class="r" style="left:104px;top:307px;width:5px;height:1px;background:#111;"></div>
<div class="r" style="left:106px;top:305px;width:1px;height:5px;background:#111;"></div>
<div class="r" style="left:90px;top:356px;width:7px;height:1px;background:#c3c3c3;"></div>
<svg class="r" style="left:97px;top:353px;" width="4" height="7" viewBox="0 0 4 7"><path d="M0 0L4 3.5L0 7Z" fill="#000"/></svg>
<div class="r" style="left:102px;top:352px;width:9px;height:9px;background:#fff;border:1px solid #111;"></div>
<div class="r" style="left:104px;top:356px;width:5px;height:1px;background:#111;"></div>
<div class="r" style="left:106px;top:354px;width:1px;height:5px;background:#111;"></div>
<div class="r" style="left:90px;top:405px;width:7px;height:1px;background:#c3c3c3;"></div>
<svg class="r" style="left:97px;top:402px;" width="4" height="7" viewBox="0 0 4 7"><path d="M0 0L4 3.5L0 7Z" fill="#000"/></svg>
<div class="r" style="left:102px;top:401px;width:9px;height:9px;background:#fff;border:1px solid #111;"></div>
<div class="r" style="left:104px;top:405px;width:5px;height:1px;background:#111;"></div>
<div class="r" style="left:106px;top:403px;width:1px;height:5px;background:#111;"></div>
<div class="r" style="left:90px;top:454px;width:7px;height:1px;background:#c3c3c3;"></div>
<svg class="r" style="left:97px;top:451px;" width="4" height="7" viewBox="0 0 4 7"><path d="M0 0L4 3.5L0 7Z" fill="#000"/></svg>
<div class="r" style="left:102px;top:450px;width:9px;height:9px;background:#fff;border:1px solid #111;"></div>
<div class="r" style="left:104px;top:454px;width:5px;height:1px;background:#111;"></div>
<div class="r" style="left:106px;top:452px;width:1px;height:5px;background:#111;"></div>
<div class="r" style="left:73px;top:503px;width:7px;height:1px;background:#c3c3c3;"></div>
<svg class="r" style="left:80px;top:500px;" width="4" height="7" viewBox="0 0 4 7"><path d="M0 0L4 3.5L0 7Z" fill="#000"/></svg>
<div class="r" style="left:85px;top:499px;width:9px;height:9px;background:#fff;border:1px solid #111;"></div>
<div class="r" style="left:87px;top:503px;width:5px;height:1px;background:#111;"></div>
<div class="r" style="left:89px;top:501px;width:1px;height:5px;background:#111;"></div>
<div class="r" style="left:73px;top:552px;width:7px;height:1px;background:#c3c3c3;"></div>
<svg class="r" style="left:80px;top:549px;" width="4" height="7" viewBox="0 0 4 7"><path d="M0 0L4 3.5L0 7Z" fill="#000"/></svg>
<div class="r" style="left:85px;top:548px;width:9px;height:9px;background:#fff;border:1px solid #111;"></div>
<div class="r" style="left:87px;top:552px;width:5px;height:1px;background:#111;"></div>
<div class="r" style="left:89px;top:550px;width:1px;height:5px;background:#111;"></div>
<div class="r" style="left:73px;top:601px;width:7px;height:1px;background:#c3c3c3;"></div>
<svg class="r" style="left:80px;top:598px;" width="4" height="7" viewBox="0 0 4 7"><path d="M0 0L4 3.5L0 7Z" fill="#000"/></svg>
<div class="r" style="left:85px;top:597px;width:9px;height:9px;background:#fff;border:1px solid #111;"></div>
<div class="r" style="left:87px;top:601px;width:5px;height:1px;background:#111;"></div>
<div class="r" style="left:89px;top:599px;width:1px;height:5px;background:#111;"></div>
<div class="r" style="left:73px;top:650px;width:7px;height:1px;background:#c3c3c3;"></div>
<svg class="r" style="left:80px;top:647px;" width="4" height="7" viewBox="0 0 4 7"><path d="M0 0L4 3.5L0 7Z" fill="#000"/></svg>
<div class="r" style="left:85px;top:646px;width:9px;height:9px;background:#fff;border:1px solid #111;"></div>
<div class="r" style="left:87px;top:650px;width:5px;height:1px;background:#111;"></div>
<div class="r" style="left:89px;top:648px;width:1px;height:5px;background:#111;"></div>
<svg class="r" style="left:596px;top:153px;" width="16" height="16" viewBox="0 0 16 16"><path d="M0.5 9.5L6.5 1.5H9.5L15.5 5.5L8.5 14.5H5.5Z" fill="#ececec" stroke="#3a3a3a" stroke-width="1.1" stroke-linejoin="round"/><path d="M5 8.5H10" stroke="#777" stroke-width="1.2"/><path d="M14.5 6L8 14" stroke="#888" stroke-width="1.6" stroke-dasharray="1 1"/><path d="M1 10.5L5.5 14.5" stroke="#333" stroke-width="1.3"/></svg>
<svg class="r" style="left:616px;top:154px;" width="15" height="12" viewBox="0 0 15 12"><g shape-rendering="crispEdges"><rect x="0" y="1" width="15" height="11" fill="#000"/><rect x="2" y="0" width="4" height="1" fill="#000"/><rect x="9" y="0" width="4" height="1" fill="#000"/><g fill="#fffff2"><rect x="1" y="2" width="1" height="8"/><rect x="1" y="10" width="6" height="1"/><rect x="3" y="1" width="3" height="8"/><rect x="6" y="2" width="1" height="1"/><rect x="6" y="4" width="1" height="1"/><rect x="8" y="5" width="1" height="1"/><rect x="6" y="9" width="1" height="1"/><rect x="8" y="1" width="4" height="8"/><rect x="9" y="10" width="5" height="1"/><rect x="13" y="2" width="1" height="1"/><rect x="13" y="4" width="1" height="1"/><rect x="13" y="6" width="1" height="1"/><rect x="13" y="8" width="1" height="1"/></g><g fill="#000"><rect x="4" y="2" width="2" height="1"/><rect x="4" y="4" width="2" height="1"/><rect x="4" y="7" width="2" height="1"/><rect x="9" y="3" width="2" height="1"/><rect x="9" y="5" width="2" height="1"/><rect x="8" y="2" width="1" height="3"/></g></g></svg>
<svg class="r" style="left:596px;top:202px;" width="16" height="16" viewBox="0 0 16 16"><defs><linearGradient id="pg" x1="0" y1="0" x2="1" y2="1"><stop offset="0" stop-color="#f0f0f4"/><stop offset="0.5" stop-color="#a8a8b0"/><stop offset="1" stop-color="#e8e8ec"/></linearGradient></defs><path d="M0.5 8L5.5 2.5L11 7.5H15.5V8.5L10.5 14.5H7.5L2.5 10H0.5Z" fill="url(#pg)" stroke="#000" stroke-width="1.2" stroke-linejoin="round"/><circle cx="7.4" cy="7.5" r="1.2" fill="#fff" stroke="#000" stroke-width="0.9"/></svg>
<svg class="r" style="left:616px;top:203px;" width="15" height="12" viewBox="0 0 15 12"><g shape-rendering="crispEdges"><rect x="0" y="1" width="15" height="11" fill="#000"/><rect x="2" y="0" width="4" height="1" fill="#000"/><rect x="9" y="0" width="4" height="1" fill="#000"/><g fill="#fffff2"><rect x="1" y="2" width="1" height="8"/><rect x="1" y="10" width="6" height="1"/><rect x="3" y="1" width="3" height="8"/><rect x="6" y="2" width="1" height="1"/><rect x="6" y="4" width="1" height="1"/><rect x="8" y="5" width="1" height="1"/><rect x="6" y="9" width="1" height="1"/><rect x="8" y="1" width="4" height="8"/><rect x="9" y="10" width="5" height="1"/><rect x="13" y="2" width="1" height="1"/><rect x="13" y="4" width="1" height="1"/><rect x="13" y="6" width="1" height="1"/><rect x="13" y="8" width="1" height="1"/></g><g fill="#000"><rect x="4" y="2" width="2" height="1"/><rect x="4" y="4" width="2" height="1"/><rect x="4" y="7" width="2" height="1"/><rect x="9" y="3" width="2" height="1"/><rect x="9" y="5" width="2" height="1"/><rect x="8" y="2" width="1" height="3"/></g></g></svg>
<svg class="r" style="left:596px;top:251px;" width="16" height="16" viewBox="0 0 16 16"><path d="M6.0 2.7 L6.5 2.5 L6.9 2.4 L9.1 2.4 L9.5 2.5 L10.0 2.7 L10.4 2.9 L11.9 1.3 L14.2 3.6 L12.6 5.1 L12.8 5.5 L13.0 6.0 L15.1 5.9 L15.1 9.1 L13.0 9.0 L12.8 9.5 L12.6 9.9 L14.2 11.4 L11.9 13.7 L10.4 12.1 L10.0 12.3 L9.5 12.5 L9.1 12.6 L6.9 12.6 L6.5 12.5 L6.0 12.3 L5.6 12.1 L4.1 13.7 L1.8 11.4 L3.4 9.9 L3.2 9.5 L3.0 9.0 L0.9 9.1 L0.9 5.9 L3.0 6.0 L3.2 5.5 L3.4 5.1 L1.8 3.6 L4.1 1.3 L5.6 2.9Z" fill="#f6dbb4" stroke="#000" stroke-width="1.3" stroke-linejoin="round"/><path d="M8 9V13" stroke="#000" stroke-width="1"/><rect x="6.5" y="0.5" width="3" height="7.3" fill="#c8c4f4" stroke="#000" stroke-width="1.2"/><rect x="6.5" y="12" width="3" height="3.5" fill="#fff" stroke="#000" stroke-width="1.2"/></svg>
<svg class="r" style="left:616px;top:252px;" width="15" height="12" viewBox="0 0 15 12"><g shape-rendering="crispEdges"><rect x="0" y="1" width="15" height="11" fill="#000"/><rect x="2" y="0" width="4" height="1" fill="#000"/><rect x="9" y="0" width="4" height="1" fill="#000"/><g fill="#fffff2"><rect x="1" y="2" width="1" height="8"/><rect x="1" y="10" width="6" height="1"/><rect x="3" y="1" width="3" height="8"/><rect x="6" y="2" width="1" height="1"/><rect x="6" y="4" width="1" height="1"/><rect x="8" y="5" width="1" height="1"/><rect x="6" y="9" width="1" height="1"/><rect x="8" y="1" width="4" height="8"/><rect x="9" y="10" width="5" height="1"/><rect x="13" y="2" width="1" height="1"/><rect x="13" y="4" width="1" height="1"/><rect x="13" y="6" width="1" height="1"/><rect x="13" y="8" width="1" height="1"/></g><g fill="#000"><rect x="4" y="2" width="2" height="1"/><rect x="4" y="4" width="2" height="1"/><rect x="4" y="7" width="2" height="1"/><rect x="9" y="3" width="2" height="1"/><rect x="9" y="5" width="2" height="1"/><rect x="8" y="2" width="1" height="3"/></g></g></svg>
<svg class="r" style="left:596px;top:300px;" width="16" height="16" viewBox="0 0 16 16"><path d="M6.0 2.7 L6.5 2.5 L6.9 2.4 L9.1 2.4 L9.5 2.5 L10.0 2.7 L10.4 2.9 L11.9 1.3 L14.2 3.6 L12.6 5.1 L12.8 5.5 L13.0 6.0 L15.1 5.9 L15.1 9.1 L13.0 9.0 L12.8 9.5 L12.6 9.9 L14.2 11.4 L11.9 13.7 L10.4 12.1 L10.0 12.3 L9.5 12.5 L9.1 12.6 L6.9 12.6 L6.5 12.5 L6.0 12.3 L5.6 12.1 L4.1 13.7 L1.8 11.4 L3.4 9.9 L3.2 9.5 L3.0 9.0 L0.9 9.1 L0.9 5.9 L3.0 6.0 L3.2 5.5 L3.4 5.1 L1.8 3.6 L4.1 1.3 L5.6 2.9Z" fill="#f6dbb4" stroke="#000" stroke-width="1.3" stroke-linejoin="round"/><path d="M8 9V13" stroke="#000" stroke-width="1"/><rect x="6.5" y="0.5" width="3" height="7.3" fill="#c8c4f4" stroke="#000" stroke-width="1.2"/><rect x="6.5" y="12" width="3" height="3.5" fill="#fff" stroke="#000" stroke-width="1.2"/></svg>
<svg class="r" style="left:616px;top:301px;" width="15" height="12" viewBox="0 0 15 12"><g shape-rendering="crispEdges"><rect x="0" y="1" width="15" height="11" fill="#000"/><rect x="2" y="0" width="4" height="1" fill="#000"/><rect x="9" y="0" width="4" height="1" fill="#000"/><g fill="#fffff2"><rect x="1" y="2" width="1" height="8"/><rect x="1" y="10" width="6" height="1"/><rect x="3" y="1" width="3" height="8"/><rect x="6" y="2" width="1" height="1"/><rect x="6" y="4" width="1" height="1"/><rect x="8" y="5" width="1" height="1"/><rect x="6" y="9" width="1" height="1"/><rect x="8" y="1" width="4" height="8"/><rect x="9" y="10" width="5" height="1"/><rect x="13" y="2" width="1" height="1"/><rect x="13" y="4" width="1" height="1"/><rect x="13" y="6" width="1" height="1"/><rect x="13" y="8" width="1" height="1"/></g><g fill="#000"><rect x="4" y="2" width="2" height="1"/><rect x="4" y="4" width="2" height="1"/><rect x="4" y="7" width="2" height="1"/><rect x="9" y="3" width="2" height="1"/><rect x="9" y="5" width="2" height="1"/><rect x="8" y="2" width="1" height="3"/></g></g></svg>
<svg class="r" style="left:596px;top:349px;" width="16" height="16" viewBox="0 0 16 16"><path d="M6.0 2.7 L6.5 2.5 L6.9 2.4 L9.1 2.4 L9.5 2.5 L10.0 2.7 L10.4 2.9 L11.9 1.3 L14.2 3.6 L12.6 5.1 L12.8 5.5 L13.0 6.0 L15.1 5.9 L15.1 9.1 L13.0 9.0 L12.8 9.5 L12.6 9.9 L14.2 11.4 L11.9 13.7 L10.4 12.1 L10.0 12.3 L9.5 12.5 L9.1 12.6 L6.9 12.6 L6.5 12.5 L6.0 12.3 L5.6 12.1 L4.1 13.7 L1.8 11.4 L3.4 9.9 L3.2 9.5 L3.0 9.0 L0.9 9.1 L0.9 5.9 L3.0 6.0 L3.2 5.5 L3.4 5.1 L1.8 3.6 L4.1 1.3 L5.6 2.9Z" fill="#f6dbb4" stroke="#000" stroke-width="1.3" stroke-linejoin="round"/><path d="M8 9V13" stroke="#000" stroke-width="1"/><rect x="6.5" y="0.5" width="3" height="7.3" fill="#c8c4f4" stroke="#000" stroke-width="1.2"/><rect x="6.5" y="12" width="3" height="3.5" fill="#fff" stroke="#000" stroke-width="1.2"/></svg>
<svg class="r" style="left:616px;top:350px;" width="15" height="12" viewBox="0 0 15 12"><g shape-rendering="crispEdges"><rect x="0" y="1" width="15" height="11" fill="#000"/><rect x="2" y="0" width="4" height="1" fill="#000"/><rect x="9" y="0" width="4" height="1" fill="#000"/><g fill="#fffff2"><rect x="1" y="2" width="1" height="8"/><rect x="1" y="10" width="6" height="1"/><rect x="3" y="1" width="3" height="8"/><rect x="6" y="2" width="1" height="1"/><rect x="6" y="4" width="1" height="1"/><rect x="8" y="5" width="1" height="1"/><rect x="6" y="9" width="1" height="1"/><rect x="8" y="1" width="4" height="8"/><rect x="9" y="10" width="5" height="1"/><rect x="13" y="2" width="1" height="1"/><rect x="13" y="4" width="1" height="1"/><rect x="13" y="6" width="1" height="1"/><rect x="13" y="8" width="1" height="1"/></g><g fill="#000"><rect x="4" y="2" width="2" height="1"/><rect x="4" y="4" width="2" height="1"/><rect x="4" y="7" width="2" height="1"/><rect x="9" y="3" width="2" height="1"/><rect x="9" y="5" width="2" height="1"/><rect x="8" y="2" width="1" height="3"/></g></g></svg>
<svg class="r" style="left:596px;top:398px;" width="16" height="16" viewBox="0 0 16 16"><path d="M6.0 2.7 L6.5 2.5 L6.9 2.4 L9.1 2.4 L9.5 2.5 L10.0 2.7 L10.4 2.9 L11.9 1.3 L14.2 3.6 L12.6 5.1 L12.8 5.5 L13.0 6.0 L15.1 5.9 L15.1 9.1 L13.0 9.0 L12.8 9.5 L12.6 9.9 L14.2 11.4 L11.9 13.7 L10.4 12.1 L10.0 12.3 L9.5 12.5 L9.1 12.6 L6.9 12.6 L6.5 12.5 L6.0 12.3 L5.6 12.1 L4.1 13.7 L1.8 11.4 L3.4 9.9 L3.2 9.5 L3.0 9.0 L0.9 9.1 L0.9 5.9 L3.0 6.0 L3.2 5.5 L3.4 5.1 L1.8 3.6 L4.1 1.3 L5.6 2.9Z" fill="#f6dbb4" stroke="#000" stroke-width="1.3" stroke-linejoin="round"/><path d="M8 9V13" stroke="#000" stroke-width="1"/><rect x="6.5" y="0.5" width="3" height="7.3" fill="#c8c4f4" stroke="#000" stroke-width="1.2"/><rect x="6.5" y="12" width="3" height="3.5" fill="#fff" stroke="#000" stroke-width="1.2"/></svg>
<svg class="r" style="left:616px;top:399px;" width="15" height="12" viewBox="0 0 15 12"><g shape-rendering="crispEdges"><rect x="0" y="1" width="15" height="11" fill="#000"/><rect x="2" y="0" width="4" height="1" fill="#000"/><rect x="9" y="0" width="4" height="1" fill="#000"/><g fill="#fffff2"><rect x="1" y="2" width="1" height="8"/><rect x="1" y="10" width="6" height="1"/><rect x="3" y="1" width="3" height="8"/><rect x="6" y="2" width="1" height="1"/><rect x="6" y="4" width="1" height="1"/><rect x="8" y="5" width="1" height="1"/><rect x="6" y="9" width="1" height="1"/><rect x="8" y="1" width="4" height="8"/><rect x="9" y="10" width="5" height="1"/><rect x="13" y="2" width="1" height="1"/><rect x="13" y="4" width="1" height="1"/><rect x="13" y="6" width="1" height="1"/><rect x="13" y="8" width="1" height="1"/></g><g fill="#000"><rect x="4" y="2" width="2" height="1"/><rect x="4" y="4" width="2" height="1"/><rect x="4" y="7" width="2" height="1"/><rect x="9" y="3" width="2" height="1"/><rect x="9" y="5" width="2" height="1"/><rect x="8" y="2" width="1" height="3"/></g></g></svg>
<svg class="r" style="left:596px;top:447px;" width="16" height="16" viewBox="0 0 16 16"><path d="M6.0 2.7 L6.5 2.5 L6.9 2.4 L9.1 2.4 L9.5 2.5 L10.0 2.7 L10.4 2.9 L11.9 1.3 L14.2 3.6 L12.6 5.1 L12.8 5.5 L13.0 6.0 L15.1 5.9 L15.1 9.1 L13.0 9.0 L12.8 9.5 L12.6 9.9 L14.2 11.4 L11.9 13.7 L10.4 12.1 L10.0 12.3 L9.5 12.5 L9.1 12.6 L6.9 12.6 L6.5 12.5 L6.0 12.3 L5.6 12.1 L4.1 13.7 L1.8 11.4 L3.4 9.9 L3.2 9.5 L3.0 9.0 L0.9 9.1 L0.9 5.9 L3.0 6.0 L3.2 5.5 L3.4 5.1 L1.8 3.6 L4.1 1.3 L5.6 2.9Z" fill="#f6dbb4" stroke="#000" stroke-width="1.3" stroke-linejoin="round"/><path d="M8 9V13" stroke="#000" stroke-width="1"/><rect x="6.5" y="0.5" width="3" height="7.3" fill="#c8c4f4" stroke="#000" stroke-width="1.2"/><rect x="6.5" y="12" width="3" height="3.5" fill="#fff" stroke="#000" stroke-width="1.2"/></svg>
<svg class="r" style="left:616px;top:448px;" width="15" height="12" viewBox="0 0 15 12"><g shape-rendering="crispEdges"><rect x="0" y="1" width="15" height="11" fill="#000"/><rect x="2" y="0" width="4" height="1" fill="#000"/><rect x="9" y="0" width="4" height="1" fill="#000"/><g fill="#fffff2"><rect x="1" y="2" width="1" height="8"/><rect x="1" y="10" width="6" height="1"/><rect x="3" y="1" width="3" height="8"/><rect x="6" y="2" width="1" height="1"/><rect x="6" y="4" width="1" height="1"/><rect x="8" y="5" width="1" height="1"/><rect x="6" y="9" width="1" height="1"/><rect x="8" y="1" width="4" height="8"/><rect x="9" y="10" width="5" height="1"/><rect x="13" y="2" width="1" height="1"/><rect x="13" y="4" width="1" height="1"/><rect x="13" y="6" width="1" height="1"/><rect x="13" y="8" width="1" height="1"/></g><g fill="#000"><rect x="4" y="2" width="2" height="1"/><rect x="4" y="4" width="2" height="1"/><rect x="4" y="7" width="2" height="1"/><rect x="9" y="3" width="2" height="1"/><rect x="9" y="5" width="2" height="1"/><rect x="8" y="2" width="1" height="3"/></g></g></svg>
<svg class="r" style="left:596px;top:496px;" width="16" height="16" viewBox="0 0 16 16"><path d="M4 12L12 4" stroke="#111" stroke-width="5" stroke-linecap="round"/><path d="M4 12L12 4" stroke="#e0d8dc" stroke-width="3.2" stroke-linecap="round"/><path d="M5.5 10.5L10.5 5.5" stroke="#c8c0c4" stroke-width="1.2" stroke-dasharray="1 1"/><path d="M2 11.5L4.5 14M11.5 2L14 4.5" stroke="#111" stroke-width="1.3"/><path d="M0.5 15.5L1.5 14.5M14.5 1.5L15.5 0.5" stroke="#777" stroke-width="1"/></svg>
<svg class="r" style="left:616px;top:497px;" width="15" height="12" viewBox="0 0 15 12"><g shape-rendering="crispEdges"><rect x="0" y="1" width="15" height="11" fill="#000"/><rect x="2" y="0" width="4" height="1" fill="#000"/><rect x="9" y="0" width="4" height="1" fill="#000"/><g fill="#fffff2"><rect x="1" y="2" width="1" height="8"/><rect x="1" y="10" width="6" height="1"/><rect x="3" y="1" width="3" height="8"/><rect x="6" y="2" width="1" height="1"/><rect x="6" y="4" width="1" height="1"/><rect x="8" y="5" width="1" height="1"/><rect x="6" y="9" width="1" height="1"/><rect x="8" y="1" width="4" height="8"/><rect x="9" y="10" width="5" height="1"/><rect x="13" y="2" width="1" height="1"/><rect x="13" y="4" width="1" height="1"/><rect x="13" y="6" width="1" height="1"/><rect x="13" y="8" width="1" height="1"/></g><g fill="#000"><rect x="4" y="2" width="2" height="1"/><rect x="4" y="4" width="2" height="1"/><rect x="4" y="7" width="2" height="1"/><rect x="9" y="3" width="2" height="1"/><rect x="9" y="5" width="2" height="1"/><rect x="8" y="2" width="1" height="3"/></g></g></svg>
<svg class="r" style="left:596px;top:545px;" width="16" height="16" viewBox="0 0 16 16"><path d="M4 12L12 4" stroke="#111" stroke-width="5" stroke-linecap="round"/><path d="M4 12L12 4" stroke="#e0d8dc" stroke-width="3.2" stroke-linecap="round"/><path d="M5.5 10.5L10.5 5.5" stroke="#c8c0c4" stroke-width="1.2" stroke-dasharray="1 1"/><path d="M2 11.5L4.5 14M11.5 2L14 4.5" stroke="#111" stroke-width="1.3"/><path d="M0.5 15.5L1.5 14.5M14.5 1.5L15.5 0.5" stroke="#777" stroke-width="1"/></svg>
<svg class="r" style="left:616px;top:546px;" width="15" height="12" viewBox="0 0 15 12"><g shape-rendering="crispEdges"><rect x="0" y="1" width="15" height="11" fill="#000"/><rect x="2" y="0" width="4" height="1" fill="#000"/><rect x="9" y="0" width="4" height="1" fill="#000"/><g fill="#fffff2"><rect x="1" y="2" width="1" height="8"/><rect x="1" y="10" width="6" height="1"/><rect x="3" y="1" width="3" height="8"/><rect x="6" y="2" width="1" height="1"/><rect x="6" y="4" width="1" height="1"/><rect x="8" y="5" width="1" height="1"/><rect x="6" y="9" width="1" height="1"/><rect x="8" y="1" width="4" height="8"/><rect x="9" y="10" width="5" height="1"/><rect x="13" y="2" width="1" height="1"/><rect x="13" y="4" width="1" height="1"/><rect x="13" y="6" width="1" height="1"/><rect x="13" y="8" width="1" height="1"/></g><g fill="#000"><rect x="4" y="2" width="2" height="1"/><rect x="4" y="4" width="2" height="1"/><rect x="4" y="7" width="2" height="1"/><rect x="9" y="3" width="2" height="1"/><rect x="9" y="5" width="2" height="1"/><rect x="8" y="2" width="1" height="3"/></g></g></svg>
<svg class="r" style="left:596px;top:594px;" width="16" height="16" viewBox="0 0 16 16"><defs><radialGradient id="cdg"><stop offset="0" stop-color="#fff"/><stop offset="0.1" stop-color="#fff"/><stop offset="0.2" stop-color="#8a8a8a"/><stop offset="0.45" stop-color="#c8c8c8"/><stop offset="1" stop-color="#ececec"/></radialGradient></defs><path d="M5 0.5H11L15.5 5V11L11 15.5H5L0.5 11V5Z" fill="url(#cdg)" stroke="#6a6a6a" stroke-width="1"/></svg>
<svg class="r" style="left:616px;top:595px;" width="15" height="12" viewBox="0 0 15 12"><g shape-rendering="crispEdges"><rect x="0" y="1" width="15" height="11" fill="#000"/><rect x="2" y="0" width="4" height="1" fill="#000"/><rect x="9" y="0" width="4" height="1" fill="#000"/><g fill="#fffff2"><rect x="1" y="2" width="1" height="8"/><rect x="1" y="10" width="6" height="1"/><rect x="3" y="1" width="3" height="8"/><rect x="6" y="2" width="1" height="1"/><rect x="6" y="4" width="1" height="1"/><rect x="8" y="5" width="1" height="1"/><rect x="6" y="9" width="1" height="1"/><rect x="8" y="1" width="4" height="8"/><rect x="9" y="10" width="5" height="1"/><rect x="13" y="2" width="1" height="1"/><rect x="13" y="4" width="1" height="1"/><rect x="13" y="6" width="1" height="1"/><rect x="13" y="8" width="1" height="1"/></g><g fill="#000"><rect x="4" y="2" width="2" height="1"/><rect x="4" y="4" width="2" height="1"/><rect x="4" y="7" width="2" height="1"/><rect x="9" y="3" width="2" height="1"/><rect x="9" y="5" width="2" height="1"/><rect x="8" y="2" width="1" height="3"/></g></g></svg>
<svg class="r" style="left:596px;top:643px;" width="16" height="16" viewBox="0 0 16 16"><defs><radialGradient id="cdg"><stop offset="0" stop-color="#fff"/><stop offset="0.1" stop-color="#fff"/><stop offset="0.2" stop-color="#8a8a8a"/><stop offset="0.45" stop-color="#c8c8c8"/><stop offset="1" stop-color="#ececec"/></radialGradient></defs><path d="M5 0.5H11L15.5 5V11L11 15.5H5L0.5 11V5Z" fill="url(#cdg)" stroke="#6a6a6a" stroke-width="1"/></svg>
<svg class="r" style="left:616px;top:644px;" width="15" height="12" viewBox="0 0 15 12"><g shape-rendering="crispEdges"><rect x="0" y="1" width="15" height="11" fill="#000"/><rect x="2" y="0" width="4" height="1" fill="#000"/><rect x="9" y="0" width="4" height="1" fill="#000"/><g fill="#fffff2"><rect x="1" y="2" width="1" height="8"/><rect x="1" y="10" width="6" height="1"/><rect x="3" y="1" width="3" height="8"/><rect x="6" y="2" width="1" height="1"/><rect x="6" y="4" width="1" height="1"/><rect x="8" y="5" width="1" height="1"/><rect x="6" y="9" width="1" height="1"/><rect x="8" y="1" width="4" height="8"/><rect x="9" y="10" width="5" height="1"/><rect x="13" y="2" width="1" height="1"/><rect x="13" y="4" width="1" height="1"/><rect x="13" y="6" width="1" height="1"/><rect x="13" y="8" width="1" height="1"/></g><g fill="#000"><rect x="4" y="2" width="2" height="1"/><rect x="4" y="4" width="2" height="1"/><rect x="4" y="7" width="2" height="1"/><rect x="9" y="3" width="2" height="1"/><rect x="9" y="5" width="2" height="1"/><rect x="8" y="2" width="1" height="3"/></g></g></svg>
<svg class="r" style="left:75px;top:40px;" width="17" height="16" viewBox="0 0 17 16"><path d="M4.5 11.5L12 4" stroke="#000" stroke-width="1"/><path d="M12.8 3.5L8.2 5.2L10.8 7.8Z" fill="#000"/><circle cx="3.5" cy="12.5" r="2.1" fill="#d4d4d4" stroke="#000" stroke-width="1.2"/><circle cx="14" cy="2.6" r="2.1" fill="#d4d4d4" stroke="#000" stroke-width="1.2"/></svg>
<svg class="r" style="left:100px;top:40px;" width="17" height="16" viewBox="0 0 17 16"><path d="M4.5 11.5L12 4" stroke="#000" stroke-width="1"/><path d="M12.8 3.5L8.2 5.2L10.8 7.8Z" fill="#000"/><circle cx="3.5" cy="12.5" r="2.1" fill="#d4d4d4" stroke="#000" stroke-width="1.2"/><circle cx="14" cy="2.6" r="2.1" fill="#d4d4d4" stroke="#000" stroke-width="1.2"/><path d="M1 1.5L15 15.5" stroke="#7a0a1a" stroke-width="1.4"/></svg>
<svg class="r" style="left:126px;top:40px;" width="15" height="14" viewBox="0 0 15 14"><path d="M1.5 7.5H9.5L13.5 10.5L10 13.5H1.5Z" fill="#fffbe0" stroke="#111" stroke-width="1"/><path d="M1.5 13H10L13.5 10.5V12L10.5 14H1.5Z" fill="#222"/><path d="M3.5 10.5L11.5 2.5L13.5 4.5L5.5 12L3 12.5Z" fill="#f4c430" stroke="#5a4a10" stroke-width="0.9"/><path d="M11.5 2.5L12.5 1.5L14.5 3.5L13.5 4.5Z" fill="#e07070" stroke="#5a4a10" stroke-width="0.7"/></svg>
<svg class="r" style="left:152px;top:41px;" width="18" height="15" viewBox="0 0 18 15"><rect x="4.5" y="1.5" width="12" height="7.5" fill="#e4f8ff" stroke="#142850" stroke-width="1.2"/><rect x="1.5" y="5.5" width="12" height="8" fill="#e4f8ff" stroke="#142850" stroke-width="1.2"/><rect x="2.2" y="7" width="10.6" height="2.6" fill="#7cc8ec"/></svg>
<svg class="r" style="left:178px;top:40px;" width="15" height="15" viewBox="0 0 15 15"><path d="M1.5 0.5H6.5L8.5 2.5V10.5H1.5Z" fill="#fffde8" stroke="#77704a" stroke-width="1"/><path d="M6.5 4.5H11.5L13.5 6.5V14.5H6.5Z" fill="#fffde8" stroke="#77704a" stroke-width="1"/><path d="M3 3h3.5M3 5h3.5M3 7h3.5M8 7.5h4M8 9.5h4M8 11.5h4" stroke="#a8a278" stroke-width="0.9"/></svg>
<svg class="r" style="left:201px;top:46px;" width="8" height="4" viewBox="0 0 8 4"><path d="M0 0H8L4 4Z" fill="#000"/></svg>
<svg class="r" style="left:216px;top:40px;" width="18" height="16" viewBox="0 0 18 16"><path d="M2.6 4.5V13.9H6M2.6 8.8H6" stroke="#2a1a5a" stroke-width="1.1" fill="none"/><g fill="#48b8ec" stroke="#0c4a84" stroke-width="1"><circle cx="2.9" cy="3.6" r="1.8"/><circle cx="7.2" cy="8.8" r="1.8"/><circle cx="7.2" cy="13.9" r="1.8"/></g><rect x="8.3" y="0.4" width="3.8" height="6.2" rx="0.6" fill="#000"/><rect x="12.4" y="0.4" width="4.4" height="6.2" rx="0.6" fill="#000"/><g fill="#fff"><rect x="10" y="1.6" width="1" height="1"/><rect x="9.4" y="3.4" width="1" height="1"/><rect x="9.4" y="5" width="1" height="1"/><rect x="14.2" y="1.6" width="1" height="1"/><rect x="13.6" y="3.4" width="1" height="1"/><rect x="13.6" y="5" width="1" height="1"/></g><path d="M16.3 9.2V12.6H12" stroke="#1a6a3a" stroke-width="1.6" fill="none"/><path d="M10.2 12.6L13 10.2V15Z" fill="#1a6a3a"/></svg>
<svg class="r" style="left:240px;top:46px;" width="8" height="4" viewBox="0 0 8 4"><path d="M0 0H8L4 4Z" fill="#000"/></svg>
<svg class="r" style="left:255px;top:41px;" width="18" height="14" viewBox="0 0 18 14"><rect x="0.8" y="0.8" width="9" height="11" fill="#f8f8ff" stroke="#111" stroke-width="1.3"/><rect x="7.5" y="2.3" width="9" height="11" fill="#f8f8ff" stroke="#111" stroke-width="1.3"/><path d="M4 7.5H14" stroke="#5548a8" stroke-width="2.4"/><path d="M1.5 7.5L6 3.5V11.5Z M16.5 7.5L12 3.5V11.5Z" fill="#5548a8"/></svg>
<svg class="r" style="left:283px;top:43px;" width="13" height="10" viewBox="0 0 13 10"><path d="M1.5 4.5L5.5 8.3L11.8 2" stroke="#3a0008" stroke-width="3.2" fill="none" stroke-linejoin="round"/><path d="M1.6 4.2L5.5 7.6L11.5 1.6" stroke="#d81020" stroke-width="1.8" fill="none"/></svg>
<svg class="r" style="left:308px;top:41px;" width="11" height="12" viewBox="0 0 11 12"><path d="M2.2 10.3L6.8 5.6" stroke="#17924a" stroke-width="3.4" stroke-linecap="round"/><path d="M3.2 0.8H10.3V7.9Z" fill="#5ede6e" stroke="#1a9a40" stroke-width="0.9" stroke-linejoin="round"/></svg>
<svg class="r" style="left:333px;top:42px;" width="13" height="11" viewBox="0 0 13 11"><path d="M4.5 6.5L9 2.3C10.5 1 12 2 11.8 4" stroke="#b80c1c" stroke-width="3" fill="none" stroke-linecap="round"/><path d="M0.8 10.2V3.2L7.8 10.2Z" fill="#f45868" stroke="#c01828" stroke-width="0.9" stroke-linejoin="round"/></svg>
<svg class="r" style="left:356px;top:40px;" width="17" height="15" viewBox="0 0 17 15"><rect x="1" y="6" width="15" height="7.5" rx="1.5" fill="#e8d4b0" stroke="#8a6a40" stroke-width="1"/><rect x="4" y="1" width="9" height="6" fill="#fff" stroke="#555" stroke-width="1"/><path d="M5.5 3h6M5.5 5h6" stroke="#555" stroke-width="0.8"/><rect x="5" y="9.5" width="6" height="2" fill="#40b040"/><path d="M1.5 11H15.5" stroke="#b89a70" stroke-width="1"/></svg>
<svg class="r" style="left:379px;top:46px;" width="8" height="4" viewBox="0 0 8 4"><path d="M0 0H8L4 4Z" fill="#000"/></svg>
<svg class="r" style="left:397px;top:41px;" width="12" height="12" viewBox="0 0 12 12"><g stroke="#2a9a60" stroke-width="1" fill="none"><path d="M3 1H11.5V10.5H3Z M3 4H11.5 M3 7H11.5 M6 1V10.5 M9 1V10.5"/></g><path d="M0.5 11.5L5 7" stroke="#1a7a3a" stroke-width="1.5"/><path d="M6 5.5V8.5L3 8.5Z" fill="#1a7a3a"/></svg>
<svg class="r" style="left:418px;top:46px;" width="8" height="4" viewBox="0 0 8 4"><path d="M0 0H8L4 4Z" fill="#000"/></svg>
<svg class="r" style="left:434px;top:41px;" width="17" height="15" viewBox="0 0 17 15"><path d="M3 2L15 13" stroke="#555" stroke-width="1.6"/><path d="M14 2L8 8" stroke="#777" stroke-width="1.8"/><circle cx="14.5" cy="2" r="1.8" fill="none" stroke="#777" stroke-width="1"/><path d="M2 1.5A2.5 2.5 0 1 0 5 4" stroke="#888" stroke-width="1.5" fill="none"/><ellipse cx="4.5" cy="11.5" rx="4" ry="2.8" transform="rotate(-45 4.5 11.5)" fill="#6a8ac8" stroke="#3a5a98" stroke-width="1"/></svg>
<svg class="r" style="left:455px;top:46px;" width="8" height="4" viewBox="0 0 8 4"><path d="M0 0H8L4 4Z" fill="#000"/></svg>
<svg class="r" style="left:472px;top:40px;" width="15" height="17" viewBox="0 0 15 17"><defs><linearGradient id="hg" x1="0" y1="0" x2="0" y2="1"><stop offset="0" stop-color="#fff"/><stop offset="1" stop-color="#f8d040"/></linearGradient></defs><rect x="0.8" y="0.8" width="13" height="12" fill="url(#hg)" stroke="#1a2a6a" stroke-width="1.3"/><path d="M8 13V16L10 13Z" fill="#1a2a6a"/><text x="7.3" y="10.5" font-family="Liberation Sans" font-weight="bold" font-size="10" text-anchor="middle" fill="#000">?</text></svg>
<svg class="r" style="left:488px;top:64px;" width="18" height="16" viewBox="0 0 18 16"><path d="M2.3 3V12.8H5.5M2.3 7.8H5.5" stroke="#2a1a5a" stroke-width="1.1" fill="none"/><g fill="#48b8ec" stroke="#0c4a84" stroke-width="1"><circle cx="2.4" cy="2.4" r="1.7"/><circle cx="6.5" cy="7.8" r="1.7"/><circle cx="6.5" cy="12.8" r="1.7"/></g><path d="M9.5 1.2H16.5V3.8L14 4.8V8.8H12V4.8L9.5 3.8Z" fill="#d8a040" stroke="#7a5010" stroke-width="0.8"/></svg>
<svg class="r" style="left:515px;top:64px;" width="13" height="16" viewBox="0 0 13 16"><path d="M0.8 0.8H9L12.2 4V15.2H0.8Z" fill="#fff" stroke="#111" stroke-width="1.2"/><path d="M4 5.5A3 3 0 0 1 9 6" stroke="#1a9a30" stroke-width="1.6" fill="none"/><path d="M9 10A3 3 0 0 1 4 10" stroke="#1a9a30" stroke-width="1.6" fill="none"/><path d="M8 4L10.5 6.5L7.5 7Z M5 12L2.5 9.5L5.5 9Z" fill="#1a9a30"/></svg>
<svg class="r" style="left:541px;top:67px;" width="11" height="10" viewBox="0 0 11 10"><path d="M0.5 1H10.5L6.5 5V9.5H4.5V5Z" fill="#fff" stroke="#000" stroke-width="1.2"/></svg>
<svg class="r" style="left:563px;top:64px;" width="16" height="16" viewBox="0 0 16 16"><rect x="1" y="2" width="12" height="13" fill="#fff" stroke="#888" stroke-width="1"/><rect x="1" y="1" width="12" height="3" fill="#f0d040" stroke="#a08820" stroke-width="0.8"/><path d="M3 7h8M3 9h8M3 11h6" stroke="#aaa" stroke-width="0.8"/><path d="M6 12L14 4L15.5 5.5L7.5 13.5L5.5 14Z" fill="#c89030" stroke="#604010" stroke-width="0.8"/></svg>
<svg class="r" style="left:589px;top:64px;" width="15" height="16" viewBox="0 0 15 16"><text x="3.5" y="7" font-family="Liberation Sans" font-weight="bold" font-size="8" fill="#3a6ac8" text-anchor="middle">A</text><text x="3.5" y="15" font-family="Liberation Sans" font-weight="bold" font-size="9" fill="#c83040" text-anchor="middle">Z</text><path d="M11 1V13" stroke="#1a7a3a" stroke-width="1.2"/><path d="M8 11L11 15L14 11Z" fill="#1a7a3a"/></svg>
<svg class="r" style="left:611px;top:64px;" width="17" height="16" viewBox="0 0 17 16"><rect x="1.5" y="7.5" width="8" height="7.5" fill="#fff" stroke="#000" stroke-width="1"/><path d="M4 8V15M6.5 8V15" stroke="#000" stroke-width="0.9"/><path d="M6 4.5H3V6.5" stroke="#000" stroke-width="1.1" fill="none"/><path d="M1.5 5.5L3 7.5L4.5 5.5Z M5.5 3L7.5 4.5L5.5 6Z" fill="#000"/><path d="M9.5 1H16.5V3.8L14 4.8V8.8H12V4.8L9.5 3.8Z" fill="#d8a040" stroke="#7a5010" stroke-width="0.8"/></svg>
<svg class="r" style="left:637px;top:64px;" width="16" height="16" viewBox="0 0 16 16"><path d="M3 1V12" stroke="#1a2a6a" stroke-width="1.2"/><path d="M0.5 10.5L3 15L5.5 10.5Z" fill="#1a2a6a"/><path d="M9 3.5V13H12.5M9 8H12.5" stroke="#2a1a5a" stroke-width="1.1" fill="none"/><g fill="#48b8ec" stroke="#0c4a84" stroke-width="1"><circle cx="9.2" cy="2.6" r="1.7"/><circle cx="13.6" cy="8" r="1.7"/><circle cx="13.6" cy="13" r="1.7"/></g></svg>
<svg class="r" style="left:662px;top:64px;" width="17" height="16" viewBox="0 0 17 16"><path d="M3 13L14 2.5" stroke="#1a2a6a" stroke-width="1"/><path d="M11.5 5L8 6.5L10 8.5Z" fill="#000"/><g fill="#48b8ec" stroke="#0c4a84" stroke-width="1"><circle cx="3" cy="13" r="2"/><circle cx="14" cy="2.5" r="2"/></g><path d="M1 2.5C6 3.5 10 8 12.5 14.5" stroke="#b01818" stroke-width="1.7" fill="none"/></svg>
<svg class="r" style="left:686px;top:65px;" width="17" height="14" viewBox="0 0 17 14"><defs><radialGradient id="pie" cx="40%" cy="35%" r="70%"><stop offset="0" stop-color="#ffb0b8"/><stop offset="0.5" stop-color="#e84050"/><stop offset="1" stop-color="#a01828"/></radialGradient></defs><ellipse cx="8.5" cy="7" rx="7.8" ry="6" fill="url(#pie)" stroke="#8a2030" stroke-width="0.7"/><path d="M9 7L14.5 6A6 4 0 0 1 13 9.5Z" fill="#40a850"/><path d="M9 7L13 9.5A6 4 0 0 1 10 10.8Z" fill="#4a70d0"/><path d="M9 7L10 10.8A6 4 0 0 1 7.5 10.5Z" fill="#e8c828"/></svg>
<svg class="r" style="left:884px;top:137px;" width="16" height="15" viewBox="0 0 16 15"><rect x="0.5" y="0.5" width="15" height="14" rx="2" fill="#f3f2ec" stroke="#dcdad0"/><path d="M4.5 9L8 5.5L11.5 9" stroke="#c4c2b8" stroke-width="2" fill="none"/></svg>
<svg class="r" style="left:884px;top:659px;" width="16" height="16" viewBox="0 0 16 16"><rect x="0.5" y="0.5" width="15" height="15" rx="2" fill="#f3f2ec" stroke="#dcdad0"/><path d="M4.5 6.5L8 10L11.5 6.5" stroke="#c4c2b8" stroke-width="2" fill="none"/></svg>
<svg class="r" style="left:646px;top:676px;" width="16" height="16" viewBox="0 0 16 16"><rect x="0.5" y="0.5" width="15" height="15" rx="2" fill="#f3f2ec" stroke="#dcdad0"/><path d="M9.5 4.5L6 8L9.5 11.5" stroke="#c4c2b8" stroke-width="2" fill="none"/></svg>
<svg class="r" style="left:866px;top:676px;" width="16" height="16" viewBox="0 0 16 16"><rect x="0.5" y="0.5" width="15" height="15" rx="2" fill="#f3f2ec" stroke="#dcdad0"/><path d="M6.5 4.5L10 8L6.5 11.5" stroke="#c4c2b8" stroke-width="2" fill="none"/></svg>
<div class="r" style="left:295px;top:251px;width:188px;height:313px;background:#eeeeee;border-right:1px solid #a8a8a8;border-bottom:1px solid #a8a8a8;"></div>
<div class="r" style="left:295px;top:251px;width:24px;height:312px;background:#e2dfda;"></div>
<div class="r" style="left:295px;top:354px;width:187px;height:21px;background:#b6cae4;"></div>
<div class="r" style="left:295px;top:348px;width:187px;height:1px;background:#a8a8a8;"></div>
<div class="r" style="left:295px;top:349px;width:187px;height:1px;background:#fbfbfb;"></div>
<div class="r" style="left:295px;top:477px;width:187px;height:1px;background:#a8a8a8;"></div>
<div class="r" style="left:295px;top:478px;width:187px;height:1px;background:#fbfbfb;"></div>
<div class="r" style="left:295px;top:515px;width:187px;height:1px;background:#a8a8a8;"></div>
<div class="r" style="left:295px;top:516px;width:187px;height:1px;background:#fbfbfb;"></div>
<div class="t" style="left:321px;top:261px;font-size:11px;letter-spacing:0.78px;color:#000;">Show History</div>
<div class="t" style="left:321px;top:286px;font-size:11px;letter-spacing:0.78px;color:#000;">Revise Object</div>
<div class="t" style="left:321px;top:307px;font-size:11px;letter-spacing:0.78px;color:#000;">Promote Object</div>
<div class="t" style="left:321px;top:328px;font-size:11px;letter-spacing:0.78px;color:#000;">Demote Object</div>
<div class="t" style="left:321px;top:359px;font-size:11px;letter-spacing:0.78px;color:#000;">Add Existing [Enhanced]</div>
<div class="t" style="left:321px;top:380px;font-size:11px;letter-spacing:0.78px;color:#000;">Add Existing [Simple]</div>
<div class="t" style="left:321px;top:401px;font-size:11px;letter-spacing:0.78px;color:#000;">Build by Typing</div>
<div class="t" style="left:321px;top:425px;font-size:11px;letter-spacing:0.78px;color:#000;">Add To</div>
<div class="t" style="left:321px;top:453px;font-size:11px;letter-spacing:0.78px;color:#000;">Create New</div>
<div class="t" style="left:321px;top:491px;font-size:11px;letter-spacing:0.78px;color:#000;">Reports</div>
<div class="t" style="left:321px;top:526px;font-size:11px;letter-spacing:0.78px;color:#000;">Disconnect</div>
<div class="t" style="left:321px;top:547px;font-size:11px;letter-spacing:0.78px;color:#000;">Delete</div>
<svg class="r" style="left:468px;top:429px;" width="5" height="7" viewBox="0 0 5 7"><path d="M0 0L5 3.5L0 7Z" fill="#000"/></svg>
<div class="r" style="left:467px;top:432px;width:2px;height:1px;background:#000;"></div>
<svg class="r" style="left:468px;top:457px;" width="5" height="7" viewBox="0 0 5 7"><path d="M0 0L5 3.5L0 7Z" fill="#000"/></svg>
<div class="r" style="left:467px;top:460px;width:2px;height:1px;background:#000;"></div>
<svg class="r" style="left:299px;top:256px;" width="16" height="16" viewBox="0 0 16 16"><rect x="1" y="1" width="14" height="14" rx="2" fill="#fff" stroke="#1a5fb4" stroke-width="2"/><path d="M5 4V12H11M5 8H11M5 4H9" stroke="#1a5fb4" stroke-width="1.3" fill="none"/><circle cx="5" cy="4" r="1" fill="#1a5fb4"/></svg>
<svg class="r" style="left:299px;top:487px;" width="16" height="16" viewBox="0 0 16 16"><rect x="0.5" y="0.5" width="14" height="14" fill="#f4f8fc" stroke="#888" stroke-width="1"/><path d="M15.5 1V15.5H1" stroke="#000" stroke-width="1.6" fill="none"/><path d="M3 4h9M3 6h9" stroke="#a8c0e0" stroke-width="0.8"/><rect x="3" y="8" width="9" height="4" fill="#5a7ab0"/></svg>
<div class="r" style="left:864px;top:736px;width:46px;height:23px;border-top:1px solid #fff;border-left:1px solid #fff;"></div>
<div class="r" style="left:871px;top:740px;width:16px;height:16px;background:#c8c8c8;border:1px solid #3a3a3a;border-right:none;box-shadow:inset 2px 2px 0 #fff;"></div>
<div class="r" style="left:887px;top:740px;width:16px;height:16px;background:#c8c8c8;border:1px solid #3a3a3a;border-top:2px solid #000;border-left:2px solid #000;"></div>
<svg class="r" style="left:873px;top:742px;" width="13" height="13" viewBox="0 0 13 13"><rect x="1.5" y="1.5" width="6" height="8" fill="#fff" stroke="#000" stroke-width="1.2"/><rect x="3.8" y="3.5" width="6" height="8.5" fill="#d0d0d0" stroke="#000" stroke-width="1.2"/></svg>
<svg class="r" style="left:890px;top:743px;" width="12" height="12" viewBox="0 0 12 12"><rect x="1.6" y="0.8" width="7.5" height="10" fill="#fff" stroke="#000" stroke-width="1.3"/><path d="M3.5 3.5h4M3.5 5.5h4M3.5 7.5h4" stroke="#444" stroke-width="0.9"/></svg>
<div class="t" style="left:500px;top:148px;font-size:11px;letter-spacing:0.65px;color:#000;">Lorem ipsu...</div>
<div class="t" style="left:500px;top:163px;font-size:11px;letter-spacing:0.8px;">(<span style="color:#183a6c;text-decoration:underline">more</span>)</div>
<div class="r" style="left:6px;top:727px;width:905px;height:1px;background:#2b3f55;"></div>
<div class="t" style="left:6px;top:742px;font-size:11px;letter-spacing:1.2px;color:#000;">11 </div>
<div class="t" style="left:24px;top:742px;font-size:11px;letter-spacing:1.1px;color:#000;font-style:italic;">rows</div>
</body></html>
